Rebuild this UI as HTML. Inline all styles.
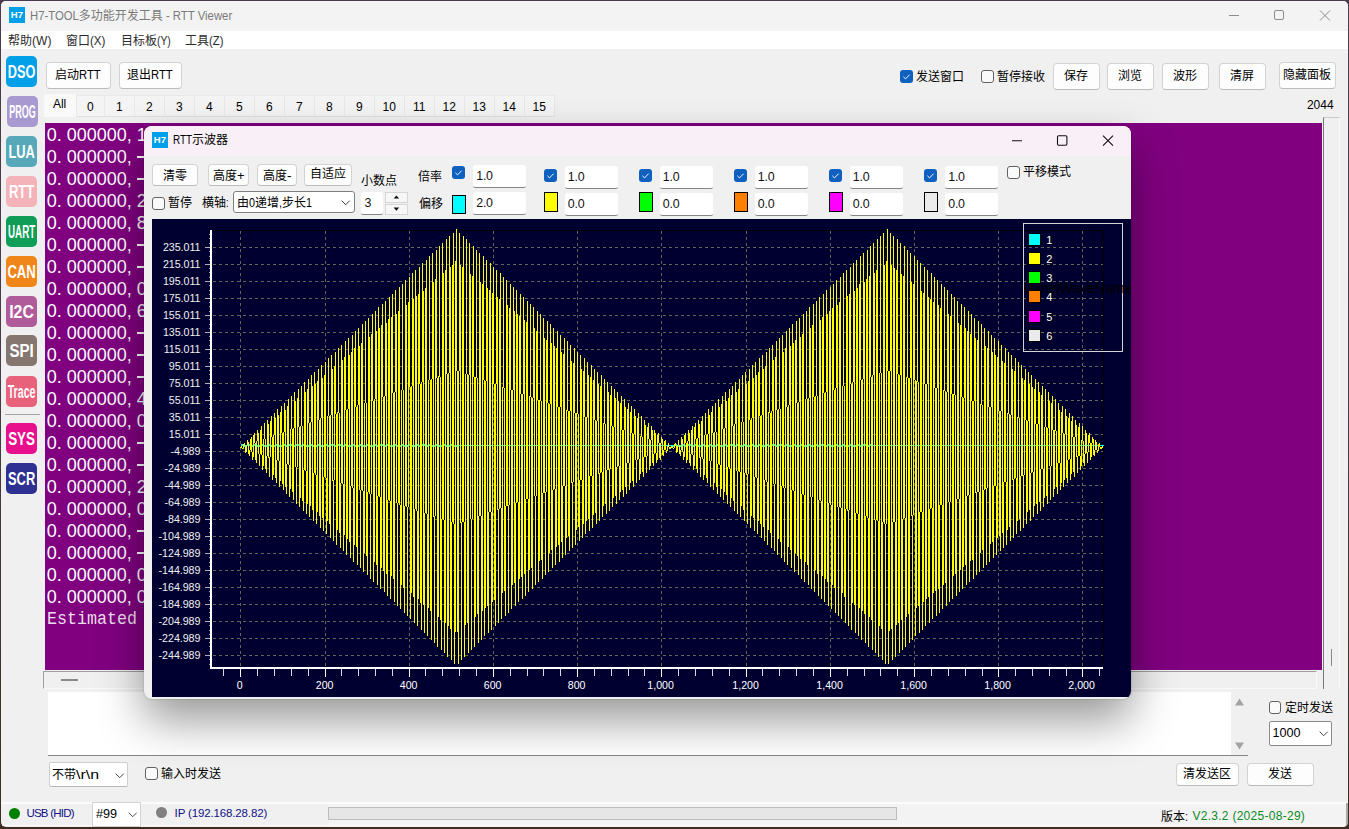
<!DOCTYPE html>
<html lang="zh"><head><meta charset="utf-8"><title>H7-TOOL - RTT Viewer</title><style>
html,body{margin:0;padding:0}
body{width:1349px;height:829px;overflow:hidden;background:linear-gradient(#4b3b4f,#4a3a48 45%,#3d2c22);font-family:"Liberation Sans", sans-serif;position:relative}
div,span.t,span.m,svg.l{position:absolute}
svg.l{overflow:visible}
svg.l text{stroke:none;font-family:"Liberation Sans", "Noto Sans CJK SC", sans-serif}
#win{left:1px;top:1px;width:1347px;height:826px;background:#f0f0f0;border-radius:5px;overflow:hidden}
#osc{background:#f0f0f0;border-radius:8px;overflow:hidden;box-shadow:0 21px 46px rgba(0,0,0,.41),0 0 2px rgba(0,0,0,.25)}
#plot{background:#000030;overflow:hidden}
.btn{background:#fdfdfd;border:1px solid #d3d3d3;border-bottom-color:#bcbcbc;border-radius:4px;box-sizing:border-box}
span.d{position:absolute;font-size:18px;line-height:22px;height:22px;color:#fff;white-space:pre}
span.m{font-family:"Liberation Mono",monospace;font-size:16.67px;line-height:22px;height:22px;color:rgba(255,255,255,.88);white-space:pre;transform-origin:0 50%;transform:scaleY(1.14)}
</style></head><body>
<div id="win">
<div style="left:0px;top:0px;width:1347px;height:30px;background:#f3f3f3"></div>
<div style="left:0px;top:30px;width:1347px;height:18px;background:#fff"></div>
<div style="left:8px;top:6px;width:16px;height:16px;background:#00a0e8"><span class="t" style="left:0;top:0;width:16px;height:16px;line-height:16px;text-align:center;font-size:9.5px;font-weight:bold;color:#fff;letter-spacing:0.2px">H7</span></div>
<svg class="l" style="left:29.4px;top:2.5px" width="205" height="24" font-size="12" fill="#7a7a7a" stroke="#7a7a7a" stroke-width="0"><title>H7-TOOL多功能开发工具 - RTT Viewer</title><text x="48.78" y="16.44" textLength="84" lengthAdjust="spacingAndGlyphs">多功能开发工具</text><text x="0.00" y="16.44" textLength="48.78" lengthAdjust="spacingAndGlyphs" xml:space="preserve">H7-TOOL</text><text x="132.78" y="16.44" textLength="69.42" lengthAdjust="spacingAndGlyphs" xml:space="preserve"> - RTT Viewer</text></svg>
<svg class="l" style="left:1220px;top:0" width="126" height="30" fill="none" stroke="#8c8c8c" stroke-width="1"><path d="M8 14.5H18"/><rect x="53.5" y="9.5" width="9" height="9" rx="1.5"/><path d="M99 9.5L109 19.5M109 9.5L99 19.5"/></svg>
<svg class="l" style="left:7px;top:27.6px" width="46" height="24" font-size="12" fill="#2b2b2b" stroke="#2b2b2b" stroke-width="0"><title>帮助(W)</title><text x="0" y="16.44" textLength="24" lengthAdjust="spacingAndGlyphs">帮助</text><text x="24.00" y="16.44" textLength="19.40" lengthAdjust="spacingAndGlyphs" xml:space="preserve">(W)</text></svg>
<svg class="l" style="left:65px;top:27.6px" width="42" height="24" font-size="12" fill="#2b2b2b" stroke="#2b2b2b" stroke-width="0"><title>窗口(X)</title><text x="0" y="16.44" textLength="24" lengthAdjust="spacingAndGlyphs">窗口</text><text x="24.00" y="16.44" textLength="15.40" lengthAdjust="spacingAndGlyphs" xml:space="preserve">(X)</text></svg>
<svg class="l" style="left:119.6px;top:27.6px" width="52" height="24" font-size="12" fill="#2b2b2b" stroke="#2b2b2b" stroke-width="0"><title>目标板(Y)</title><text x="0" y="16.44" textLength="36" lengthAdjust="spacingAndGlyphs">目标板</text><text x="36.00" y="16.44" textLength="13.80" lengthAdjust="spacingAndGlyphs" xml:space="preserve">(Y)</text></svg>
<svg class="l" style="left:184px;top:27.6px" width="41" height="24" font-size="12" fill="#2b2b2b" stroke="#2b2b2b" stroke-width="0"><title>工具(Z)</title><text x="0" y="16.44" textLength="24" lengthAdjust="spacingAndGlyphs">工具</text><text x="24.00" y="16.44" textLength="14.40" lengthAdjust="spacingAndGlyphs" xml:space="preserve">(Z)</text></svg>
<div style="left:5.3px;top:55px;width:31.2px;height:31.2px;background:#00a0e8;border-radius:5px"><svg class="l" style="left:0;top:0" width="31.2" height="31.2"><text x="15.6" y="22.2" text-anchor="middle" textLength="27.6" lengthAdjust="spacingAndGlyphs" font-size="18" font-weight="bold" fill="#fff">DSO</text></svg></div>
<div style="left:6.1px;top:95px;width:31.2px;height:31.2px;background:#a999d1;border-radius:5px"><svg class="l" style="left:0;top:0" width="31.2" height="31.2"><text x="15.6" y="22.2" text-anchor="middle" textLength="26.5" lengthAdjust="spacingAndGlyphs" font-size="18" font-weight="bold" fill="#fff">PROG</text></svg></div>
<div style="left:5.3px;top:135px;width:31.2px;height:31.2px;background:#57a9b9;border-radius:5px"><svg class="l" style="left:0;top:0" width="31.2" height="31.2"><text x="15.6" y="22.2" text-anchor="middle" textLength="26.4" lengthAdjust="spacingAndGlyphs" font-size="18" font-weight="bold" fill="#fff">LUA</text></svg></div>
<div style="left:5.3px;top:175px;width:31.2px;height:31.2px;background:#f4b3b9;border-radius:5px"><svg class="l" style="left:0;top:0" width="31.2" height="31.2"><text x="15.6" y="22.2" text-anchor="middle" textLength="25.4" lengthAdjust="spacingAndGlyphs" font-size="18" font-weight="bold" fill="#fff">RTT</text></svg></div>
<div style="left:5.3px;top:214.5px;width:31.2px;height:31.2px;background:#0f9d58;border-radius:5px"><svg class="l" style="left:0;top:0" width="31.2" height="31.2"><text x="15.6" y="22.2" text-anchor="middle" textLength="27.2" lengthAdjust="spacingAndGlyphs" font-size="18" font-weight="bold" fill="#fff">UART</text></svg></div>
<div style="left:5.3px;top:254.5px;width:31.2px;height:31.2px;background:#f0851a;border-radius:5px"><svg class="l" style="left:0;top:0" width="31.2" height="31.2"><text x="15.6" y="22.2" text-anchor="middle" textLength="28.4" lengthAdjust="spacingAndGlyphs" font-size="18" font-weight="bold" fill="#fff">CAN</text></svg></div>
<div style="left:5.3px;top:295px;width:31.2px;height:31.2px;background:#b05c9b;border-radius:5px"><svg class="l" style="left:0;top:0" width="31.2" height="31.2"><text x="15.6" y="22.2" text-anchor="middle" textLength="24.8" lengthAdjust="spacingAndGlyphs" font-size="18" font-weight="bold" fill="#fff">I2C</text></svg></div>
<div style="left:5.3px;top:333.6px;width:31.2px;height:31.2px;background:#867670;border-radius:5px"><svg class="l" style="left:0;top:0" width="31.2" height="31.2"><text x="15.6" y="22.2" text-anchor="middle" textLength="24.4" lengthAdjust="spacingAndGlyphs" font-size="18" font-weight="bold" fill="#fff">SPI</text></svg></div>
<div style="left:5.3px;top:374.8px;width:31.2px;height:31.2px;background:#e8627c;border-radius:5px"><svg class="l" style="left:0;top:0" width="31.2" height="31.2"><text x="15.6" y="22.2" text-anchor="middle" textLength="27.8" lengthAdjust="spacingAndGlyphs" font-size="18" font-weight="bold" fill="#fff">Trace</text></svg></div>
<div style="left:5.3px;top:421.8px;width:31.2px;height:31.2px;background:#e8108c;border-radius:5px"><svg class="l" style="left:0;top:0" width="31.2" height="31.2"><text x="15.6" y="22.2" text-anchor="middle" textLength="26.8" lengthAdjust="spacingAndGlyphs" font-size="18" font-weight="bold" fill="#fff">SYS</text></svg></div>
<div style="left:5.3px;top:462.2px;width:31.2px;height:31.2px;background:#2e3192;border-radius:5px"><svg class="l" style="left:0;top:0" width="31.2" height="31.2"><text x="15.6" y="22.2" text-anchor="middle" textLength="27.2" lengthAdjust="spacingAndGlyphs" font-size="18" font-weight="bold" fill="#fff">SCR</text></svg></div>
<div style="left:4px;top:413px;width:35px;height:1px;background:#a6a6a6"></div>
<div class="btn" style="left:45px;top:61px;width:65px;height:27px;"></div><svg class="l" style="left:54.05px;top:62.2px" width="48" height="24" font-size="12" fill="#000" stroke="#000" stroke-width="0"><title>启动RTT</title><text x="0" y="16.44" textLength="24" lengthAdjust="spacingAndGlyphs">启动</text><text x="24.00" y="16.44" textLength="21.70" lengthAdjust="spacingAndGlyphs" xml:space="preserve">RTT</text></svg>
<div class="btn" style="left:118px;top:61px;width:63px;height:27px;"></div><svg class="l" style="left:126.05000000000001px;top:62.2px" width="48" height="24" font-size="12" fill="#000" stroke="#000" stroke-width="0"><title>退出RTT</title><text x="0" y="16.44" textLength="24" lengthAdjust="spacingAndGlyphs">退出</text><text x="24.00" y="16.44" textLength="21.70" lengthAdjust="spacingAndGlyphs" xml:space="preserve">RTT</text></svg>
<div style="left:899px;top:69px;width:13px;height:13px;background:#1060c0;border-radius:3px"><svg class="l" style="left:0;top:0" width="13" height="13" fill="none" stroke="#fff" stroke-width="0.95"><path d="M3.4 6.8L5.5 8.9L9.6 4.7"/></svg></div>
<svg class="l" style="left:915px;top:63.599999999999994px" width="50" height="24" font-size="12" fill="#000" stroke="#000" stroke-width="0"><title>发送窗口</title><text x="0" y="16.44" textLength="48" lengthAdjust="spacingAndGlyphs">发送窗口</text></svg>
<div style="left:980px;top:69px;width:13px;height:13px;background:#fafafa;border:1px solid #626262;border-radius:3px;box-sizing:border-box"></div>
<svg class="l" style="left:996px;top:63.599999999999994px" width="50" height="24" font-size="12" fill="#000" stroke="#000" stroke-width="0"><title>暂停接收</title><text x="0" y="16.44" textLength="48" lengthAdjust="spacingAndGlyphs">暂停接收</text></svg>
<div class="btn" style="left:1052px;top:62px;width:47px;height:27px;"></div><svg class="l" style="left:1062.9px;top:63.2px" width="26" height="24" font-size="12" fill="#000" stroke="#000" stroke-width="0"><title>保存</title><text x="0" y="16.44" textLength="24" lengthAdjust="spacingAndGlyphs">保存</text></svg>
<div class="btn" style="left:1106px;top:62px;width:47px;height:27px;"></div><svg class="l" style="left:1116.9px;top:63.2px" width="26" height="24" font-size="12" fill="#000" stroke="#000" stroke-width="0"><title>浏览</title><text x="0" y="16.44" textLength="24" lengthAdjust="spacingAndGlyphs">浏览</text></svg>
<div class="btn" style="left:1161px;top:62px;width:47px;height:27px;"></div><svg class="l" style="left:1171.9px;top:63.2px" width="26" height="24" font-size="12" fill="#000" stroke="#000" stroke-width="0"><title>波形</title><text x="0" y="16.44" textLength="24" lengthAdjust="spacingAndGlyphs">波形</text></svg>
<div class="btn" style="left:1218px;top:62px;width:47px;height:27px;"></div><svg class="l" style="left:1228.9px;top:63.2px" width="26" height="24" font-size="12" fill="#000" stroke="#000" stroke-width="0"><title>清屏</title><text x="0" y="16.44" textLength="24" lengthAdjust="spacingAndGlyphs">清屏</text></svg>
<div class="btn" style="left:1278px;top:61px;width:57px;height:27px;"></div><svg class="l" style="left:1281.9px;top:61.8px" width="50" height="24" font-size="12" fill="#000" stroke="#000" stroke-width="0"><title>隐藏面板</title><text x="0" y="16.44" textLength="48" lengthAdjust="spacingAndGlyphs">隐藏面板</text></svg>
<span class="t" style="top:95.6px;line-height:16px;height:16px;font-size:12px;color:#000;white-space:pre;;left:1032.6px;width:300px;text-align:right;">2044</span>
<div style="left:43px;top:93px;width:32px;height:23px;background:#f9f9f9"></div>
<span class="t" style="top:95.2px;line-height:16px;height:16px;font-size:12px;color:#000;white-space:pre;;left:-91.4px;width:300px;text-align:center;">All</span>
<div style="left:75px;top:94px;width:28px;height:22px;background:#f4f4f4;border:1px solid #e9e9e9;border-right:none;border-bottom:1px solid #e0e0e0;box-sizing:border-box"></div>
<span class="t" style="top:98.0px;line-height:16px;height:16px;font-size:12px;color:#000;white-space:pre;;left:-60.7px;width:300px;text-align:center;">0</span>
<div style="left:103px;top:94px;width:30px;height:22px;background:#f4f4f4;border:1px solid #e9e9e9;border-right:none;border-bottom:1px solid #e0e0e0;box-sizing:border-box"></div>
<span class="t" style="top:98.0px;line-height:16px;height:16px;font-size:12px;color:#000;white-space:pre;;left:-31.700000000000003px;width:300px;text-align:center;">1</span>
<div style="left:133px;top:94px;width:30px;height:22px;background:#f4f4f4;border:1px solid #e9e9e9;border-right:none;border-bottom:1px solid #e0e0e0;box-sizing:border-box"></div>
<span class="t" style="top:98.0px;line-height:16px;height:16px;font-size:12px;color:#000;white-space:pre;;left:-1.6999999999999886px;width:300px;text-align:center;">2</span>
<div style="left:163px;top:94px;width:30px;height:22px;background:#f4f4f4;border:1px solid #e9e9e9;border-right:none;border-bottom:1px solid #e0e0e0;box-sizing:border-box"></div>
<span class="t" style="top:98.0px;line-height:16px;height:16px;font-size:12px;color:#000;white-space:pre;;left:28.30000000000001px;width:300px;text-align:center;">3</span>
<div style="left:193px;top:94px;width:30px;height:22px;background:#f4f4f4;border:1px solid #e9e9e9;border-right:none;border-bottom:1px solid #e0e0e0;box-sizing:border-box"></div>
<span class="t" style="top:98.0px;line-height:16px;height:16px;font-size:12px;color:#000;white-space:pre;;left:58.30000000000001px;width:300px;text-align:center;">4</span>
<div style="left:223px;top:94px;width:30px;height:22px;background:#f4f4f4;border:1px solid #e9e9e9;border-right:none;border-bottom:1px solid #e0e0e0;box-sizing:border-box"></div>
<span class="t" style="top:98.0px;line-height:16px;height:16px;font-size:12px;color:#000;white-space:pre;;left:88.30000000000001px;width:300px;text-align:center;">5</span>
<div style="left:253px;top:94px;width:30px;height:22px;background:#f4f4f4;border:1px solid #e9e9e9;border-right:none;border-bottom:1px solid #e0e0e0;box-sizing:border-box"></div>
<span class="t" style="top:98.0px;line-height:16px;height:16px;font-size:12px;color:#000;white-space:pre;;left:118.30000000000001px;width:300px;text-align:center;">6</span>
<div style="left:283px;top:94px;width:30px;height:22px;background:#f4f4f4;border:1px solid #e9e9e9;border-right:none;border-bottom:1px solid #e0e0e0;box-sizing:border-box"></div>
<span class="t" style="top:98.0px;line-height:16px;height:16px;font-size:12px;color:#000;white-space:pre;;left:148.3px;width:300px;text-align:center;">7</span>
<div style="left:313px;top:94px;width:30px;height:22px;background:#f4f4f4;border:1px solid #e9e9e9;border-right:none;border-bottom:1px solid #e0e0e0;box-sizing:border-box"></div>
<span class="t" style="top:98.0px;line-height:16px;height:16px;font-size:12px;color:#000;white-space:pre;;left:178.3px;width:300px;text-align:center;">8</span>
<div style="left:343px;top:94px;width:30px;height:22px;background:#f4f4f4;border:1px solid #e9e9e9;border-right:none;border-bottom:1px solid #e0e0e0;box-sizing:border-box"></div>
<span class="t" style="top:98.0px;line-height:16px;height:16px;font-size:12px;color:#000;white-space:pre;;left:208.3px;width:300px;text-align:center;">9</span>
<div style="left:373px;top:94px;width:30px;height:22px;background:#f4f4f4;border:1px solid #e9e9e9;border-right:none;border-bottom:1px solid #e0e0e0;box-sizing:border-box"></div>
<span class="t" style="top:98.0px;line-height:16px;height:16px;font-size:12px;color:#000;white-space:pre;;left:238.3px;width:300px;text-align:center;">10</span>
<div style="left:403px;top:94px;width:30px;height:22px;background:#f4f4f4;border:1px solid #e9e9e9;border-right:none;border-bottom:1px solid #e0e0e0;box-sizing:border-box"></div>
<span class="t" style="top:98.0px;line-height:16px;height:16px;font-size:12px;color:#000;white-space:pre;;left:268.3px;width:300px;text-align:center;">11</span>
<div style="left:433px;top:94px;width:30px;height:22px;background:#f4f4f4;border:1px solid #e9e9e9;border-right:none;border-bottom:1px solid #e0e0e0;box-sizing:border-box"></div>
<span class="t" style="top:98.0px;line-height:16px;height:16px;font-size:12px;color:#000;white-space:pre;;left:298.3px;width:300px;text-align:center;">12</span>
<div style="left:463px;top:94px;width:30px;height:22px;background:#f4f4f4;border:1px solid #e9e9e9;border-right:none;border-bottom:1px solid #e0e0e0;box-sizing:border-box"></div>
<span class="t" style="top:98.0px;line-height:16px;height:16px;font-size:12px;color:#000;white-space:pre;;left:328.3px;width:300px;text-align:center;">13</span>
<div style="left:493px;top:94px;width:30px;height:22px;background:#f4f4f4;border:1px solid #e9e9e9;border-right:none;border-bottom:1px solid #e0e0e0;box-sizing:border-box"></div>
<span class="t" style="top:98.0px;line-height:16px;height:16px;font-size:12px;color:#000;white-space:pre;;left:358.3px;width:300px;text-align:center;">14</span>
<div style="left:523px;top:94px;width:30px;height:22px;background:#f4f4f4;border:1px solid #e9e9e9;border-right:none;border-bottom:1px solid #e0e0e0;box-sizing:border-box"></div>
<span class="t" style="top:98.0px;line-height:16px;height:16px;font-size:12px;color:#000;white-space:pre;;left:388.29999999999995px;width:300px;text-align:center;">15</span>
<div style="left:553px;top:94px;width:1px;height:22px;background:#e6e6e6"></div>
<div style="left:44px;top:122px;width:1277px;height:547px;background:#800080"></div>
<span class="d" style="left:45.7px;top:122.76px">0. 000000, 1</span>
<span class="d" style="left:45.7px;top:144.76px">0. 000000, </span>
<div style="left:136px;top:155.2px;width:10px;height:1.4px;background:#fff"></div>
<span class="d" style="left:45.7px;top:166.76px">0. 000000, </span>
<div style="left:136px;top:177.2px;width:10px;height:1.4px;background:#fff"></div>
<span class="d" style="left:45.7px;top:188.76px">0. 000000, 2</span>
<span class="d" style="left:45.7px;top:210.76px">0. 000000, 8</span>
<span class="d" style="left:45.7px;top:232.76px">0. 000000, </span>
<div style="left:136px;top:243.2px;width:10px;height:1.4px;background:#fff"></div>
<span class="d" style="left:45.7px;top:254.76px">0. 000000, </span>
<div style="left:136px;top:265.2px;width:10px;height:1.4px;background:#fff"></div>
<span class="d" style="left:45.7px;top:276.76px">0. 000000, 0</span>
<span class="d" style="left:45.7px;top:298.76px">0. 000000, 6</span>
<span class="d" style="left:45.7px;top:320.76px">0. 000000, </span>
<div style="left:136px;top:331.2px;width:10px;height:1.4px;background:#fff"></div>
<span class="d" style="left:45.7px;top:342.76px">0. 000000, </span>
<div style="left:136px;top:353.2px;width:10px;height:1.4px;background:#fff"></div>
<span class="d" style="left:45.7px;top:364.76px">0. 000000, </span>
<div style="left:136px;top:375.2px;width:10px;height:1.4px;background:#fff"></div>
<span class="d" style="left:45.7px;top:386.76px">0. 000000, 4</span>
<span class="d" style="left:45.7px;top:408.76px">0. 000000, 0</span>
<span class="d" style="left:45.7px;top:430.76px">0. 000000, </span>
<div style="left:136px;top:441.2px;width:10px;height:1.4px;background:#fff"></div>
<span class="d" style="left:45.7px;top:452.76px">0. 000000, </span>
<div style="left:136px;top:463.2px;width:10px;height:1.4px;background:#fff"></div>
<span class="d" style="left:45.7px;top:474.76px">0. 000000, 2</span>
<span class="d" style="left:45.7px;top:496.76px">0. 000000, 0</span>
<span class="d" style="left:45.7px;top:518.76px">0. 000000, </span>
<div style="left:136px;top:529.2px;width:10px;height:1.4px;background:#fff"></div>
<span class="d" style="left:45.7px;top:540.76px">0. 000000, </span>
<div style="left:136px;top:551.2px;width:10px;height:1.4px;background:#fff"></div>
<span class="d" style="left:45.7px;top:562.76px">0. 000000, 0</span>
<span class="d" style="left:45.7px;top:584.76px">0. 000000, 0</span>
<span class="m" style="left:46px;top:607px">Estimated </span>
<div style="left:1321.6px;top:116px;width:17px;height:572px;background:#f0f0f0;border-left:1px solid #7a7a7a;border-top:1px solid #c8c8c8;border-right:1px solid #fafafa;box-sizing:border-box"></div>
<div style="left:1330px;top:648px;width:1px;height:17px;background:#8a8a8a"></div>
<div style="left:42.4px;top:669.6px;width:1274px;height:18px;background:#f0f0f0;border-top:1px solid #a0a0a0;border-left:1px solid #a0a0a0;border-bottom:1px solid #fafafa;border-right:1px solid #fafafa;box-sizing:border-box"></div>
<div style="left:60px;top:678.4px;width:17px;height:1.4px;background:#8a8a8a"></div>
<div style="left:47px;top:691px;width:1200px;height:63.4px;background:#fff;border-bottom:1px solid #868686"></div>
<div style="left:1230px;top:691px;width:16.6px;height:63.4px;background:#f0f0f0"></div>
<svg class="l" style="left:1230px;top:691px" width="17" height="64" fill="#a3a3a3"><path d="M4 13.5L8.5 6.5L13 13.5Z M4 50.5L8.5 57.5L13 50.5Z"/></svg>
<div style="left:1268px;top:700.4px;width:12.4px;height:12.4px;background:#fafafa;border:1px solid #626262;border-radius:3px;box-sizing:border-box"></div>
<svg class="l" style="left:1284px;top:695.1px" width="50" height="24" font-size="12" fill="#000" stroke="#000" stroke-width="0"><title>定时发送</title><text x="0" y="16.44" textLength="48" lengthAdjust="spacingAndGlyphs">定时发送</text></svg>
<div style="left:1268px;top:720px;width:63px;height:25px;background:#fff;border:1px solid #8a8a8a;border-radius:2px;box-sizing:border-box"></div>
<span class="t" style="top:723.6px;line-height:16px;height:16px;font-size:12.6px;color:#000;white-space:pre;;left:1271.6px;">1000</span>
<svg class="l" style="left:1317.6px;top:730px" width="10" height="6" fill="none" stroke="#444" stroke-width="1"><path d="M0.7 0.7L4.7 4.7L8.7 0.7"/></svg>
<div style="left:48px;top:761px;width:79px;height:25px;background:#fff;border:1px solid #cfcfcf;border-bottom-color:#b8b8b8;border-radius:2px;box-sizing:border-box"></div>
<svg class="l" style="left:51.4px;top:762px" width="49" height="24" font-size="12" fill="#000" stroke="#000" stroke-width="0"><title>不带\r\n</title><text x="0" y="16.44" textLength="24" lengthAdjust="spacingAndGlyphs">不带</text><text x="24.00" y="16.44" textLength="23.00" lengthAdjust="spacingAndGlyphs" xml:space="preserve">\r\n</text></svg>
<svg class="l" style="left:114px;top:772px" width="10" height="6" fill="none" stroke="#444" stroke-width="1"><path d="M0.7 0.7L4.7 4.7L8.7 0.7"/></svg>
<div style="left:144px;top:766px;width:12.6px;height:12.6px;background:#fafafa;border:1px solid #626262;border-radius:3px;box-sizing:border-box"></div>
<svg class="l" style="left:160px;top:760.6px" width="62" height="24" font-size="12" fill="#000" stroke="#000" stroke-width="0"><title>输入时发送</title><text x="0" y="16.44" textLength="60" lengthAdjust="spacingAndGlyphs">输入时发送</text></svg>
<div class="btn" style="left:1175px;top:762px;width:63px;height:23px;"></div><svg class="l" style="left:1181.9px;top:761.2px" width="50" height="24" font-size="12" fill="#000" stroke="#000" stroke-width="0"><title>清发送区</title><text x="0" y="16.44" textLength="48" lengthAdjust="spacingAndGlyphs">清发送区</text></svg>
<div class="btn" style="left:1246px;top:762px;width:67px;height:23px;"></div><svg class="l" style="left:1266.9px;top:761.2px" width="26" height="24" font-size="12" fill="#000" stroke="#000" stroke-width="0"><title>发送</title><text x="0" y="16.44" textLength="24" lengthAdjust="spacingAndGlyphs">发送</text></svg>
<div style="left:0px;top:801px;width:1347px;height:2px;background:#fcfcfc"></div>
<div style="left:327px;top:803px;width:1018px;height:23px;background:#f3f3f3"></div>
<div style="left:1345px;top:802px;width:2px;height:24px;background:#a9a9a9"></div>
<div style="left:0px;top:824px;width:1345px;height:1px;background:#fafafa"></div>
<div style="left:8.4px;top:807px;width:11px;height:11px;background:#008000;border-radius:50%"></div>
<span class="t" style="top:804.0px;line-height:16px;height:16px;font-size:11.5px;color:#101088;white-space:pre;letter-spacing:-0.75px;left:25.4px;">USB (HID)</span>
<div style="left:91px;top:801px;width:49px;height:25px;background:#fff;border:1px solid #d4d4d4;box-sizing:border-box"></div>
<span class="t" style="top:805.0px;line-height:16px;height:16px;font-size:12.6px;color:#000;white-space:pre;;left:95px;">#99</span>
<svg class="l" style="left:127.4px;top:811px" width="10" height="6" fill="none" stroke="#444" stroke-width="1"><path d="M0.7 0.7L4.7 4.7L8.7 0.7"/></svg>
<div style="left:155.4px;top:806.4px;width:10.8px;height:10.8px;background:#808080;border-radius:50%"></div>
<span class="t" style="top:804.0px;line-height:16px;height:16px;font-size:11.5px;color:#101088;white-space:pre;letter-spacing:-0.14px;left:173.6px;">IP (192.168.28.82)</span>
<div style="left:327.4px;top:806.4px;width:568.2px;height:13px;background:#e6e6e6;border:1px solid #bcbcbc;box-sizing:border-box"></div>
<svg class="l" style="left:1160px;top:803.6px" width="29" height="24" font-size="12" fill="#000" stroke="#000" stroke-width="0"><title>版本:</title><text x="0" y="16.44" textLength="24" lengthAdjust="spacingAndGlyphs">版本</text><text x="24.00" y="16.44" textLength="3.00" lengthAdjust="spacingAndGlyphs" xml:space="preserve">:</text></svg>
<span class="t" style="top:807.4px;line-height:16px;height:16px;font-size:12px;color:#0a8a1e;white-space:pre;letter-spacing:0.28px;left:1191.4px;">V2.3.2 (2025-08-29)</span>
<div id="osc" style="left:143px;top:125px;width:987px;height:573px">
<div style="left:0px;top:0px;width:987px;height:30px;background:#f9eff6"></div>
<div style="left:8px;top:6px;width:16px;height:16px;background:#00a0e8"><span class="t" style="left:0;top:0;width:16px;height:16px;line-height:16px;text-align:center;font-size:9.5px;font-weight:bold;color:#fff;letter-spacing:0.2px">H7</span></div>
<svg class="l" style="left:29px;top:2.4000000000000057px" width="57" height="24" font-size="12" fill="#000" stroke="#000" stroke-width="0"><title>RTT示波器</title><text x="19" y="16.44" textLength="36" lengthAdjust="spacingAndGlyphs">示波器</text><text x="0.00" y="16.44" textLength="19.00" lengthAdjust="spacingAndGlyphs" xml:space="preserve">RTT</text></svg>
<svg class="l" style="left:856px;top:-0.4000000000000057px" width="126" height="30" fill="none" stroke="#111" stroke-width="1.1"><path d="M12 14.8H22"/><rect x="57.5" y="9.7" width="9.4" height="9.6" rx="1.2"/><path d="M103 9.6L113 19.6M113 9.6L103 19.6"/></svg>
<div class="btn" style="left:8.400000000000006px;top:38.400000000000006px;width:46px;height:22px;"></div><svg class="l" style="left:19.400000000000006px;top:37.60000000000001px" width="26" height="24" font-size="12" fill="#000" stroke="#000" stroke-width="0"><title>清零</title><text x="0" y="16.44" textLength="24" lengthAdjust="spacingAndGlyphs">清零</text></svg>
<div class="btn" style="left:64.4px;top:38.400000000000006px;width:41px;height:22px;"></div><svg class="l" style="left:69.15px;top:37.60000000000001px" width="34" height="24" font-size="12" fill="#000" stroke="#000" stroke-width="0"><title>高度+</title><text x="0" y="16.44" textLength="24" lengthAdjust="spacingAndGlyphs">高度</text><text x="24.00" y="16.44" textLength="7.50" lengthAdjust="spacingAndGlyphs" xml:space="preserve">+</text></svg>
<div class="btn" style="left:113.39999999999998px;top:38.400000000000006px;width:40px;height:22px;"></div><svg class="l" style="left:119.14999999999998px;top:37.60000000000001px" width="31" height="24" font-size="12" fill="#000" stroke="#000" stroke-width="0"><title>高度-</title><text x="0" y="16.44" textLength="24" lengthAdjust="spacingAndGlyphs">高度</text><text x="24.00" y="16.44" textLength="4.50" lengthAdjust="spacingAndGlyphs" xml:space="preserve">-</text></svg>
<div class="btn" style="left:160px;top:38.400000000000006px;width:48px;height:21.4px;"></div><svg class="l" style="left:166.0px;top:36.30000000000001px" width="38" height="24" font-size="12" fill="#000" stroke="#000" stroke-width="0"><title>自适应</title><text x="0" y="16.44" textLength="36" lengthAdjust="spacingAndGlyphs">自适应</text></svg>
<svg class="l" style="left:217px;top:42.599999999999994px" width="38" height="24" font-size="12" fill="#000" stroke="#000" stroke-width="0"><title>小数点</title><text x="0" y="16.44" textLength="36" lengthAdjust="spacingAndGlyphs">小数点</text></svg>
<svg class="l" style="left:274.4px;top:39px" width="26" height="24" font-size="12" fill="#000" stroke="#000" stroke-width="0"><title>倍率</title><text x="0" y="16.44" textLength="24" lengthAdjust="spacingAndGlyphs">倍率</text></svg>
<svg class="l" style="left:275px;top:66.19999999999999px" width="26" height="24" font-size="12" fill="#000" stroke="#000" stroke-width="0"><title>偏移</title><text x="0" y="16.44" textLength="24" lengthAdjust="spacingAndGlyphs">偏移</text></svg>
<div style="left:8.400000000000006px;top:71.4px;width:12.6px;height:12.4px;background:#fafafa;border:1px solid #626262;border-radius:3px;box-sizing:border-box"></div>
<svg class="l" style="left:24px;top:65px" width="26" height="24" font-size="12" fill="#000" stroke="#000" stroke-width="0"><title>暂停</title><text x="0" y="16.44" textLength="24" lengthAdjust="spacingAndGlyphs">暂停</text></svg>
<svg class="l" style="left:58px;top:64.6px" width="29" height="24" font-size="12" fill="#000" stroke="#000" stroke-width="0"><title>横轴:</title><text x="0" y="16.44" textLength="24" lengthAdjust="spacingAndGlyphs">横轴</text><text x="24.00" y="16.44" textLength="2.60" lengthAdjust="spacingAndGlyphs" xml:space="preserve">:</text></svg>
<div style="left:89px;top:65.4px;width:121.6px;height:21.2px;background:#fff;border:1px solid #7f7f7f;border-radius:3px;box-sizing:border-box"></div>
<svg class="l" style="left:93.4px;top:65.19999999999999px" width="77" height="24" font-size="12" fill="#000" stroke="#000" stroke-width="0"><title>由0递增,步长1</title><text x="0" y="16.44">由</text><text x="18" y="16.44" textLength="24" lengthAdjust="spacingAndGlyphs">递增</text><text x="45" y="16.44" textLength="24" lengthAdjust="spacingAndGlyphs">步长</text><text x="12.00" y="16.44" textLength="6.00" lengthAdjust="spacingAndGlyphs" xml:space="preserve">0</text><text x="42.00" y="16.44" textLength="3.00" lengthAdjust="spacingAndGlyphs" xml:space="preserve">,</text><text x="69.00" y="16.44" textLength="6.00" lengthAdjust="spacingAndGlyphs" xml:space="preserve">1</text></svg>
<svg class="l" style="left:196.60000000000002px;top:74px" width="10" height="6" fill="none" stroke="#333" stroke-width="1"><path d="M0.7 0.7L4.7 4.7L8.7 0.7"/></svg>
<div style="left:217.39999999999998px;top:66px;width:21.4px;height:23px;background:#fff;border-bottom:1px solid #868686;border-radius:2.5px;box-sizing:border-box"></div><span class="t" style="top:68.80000000000001px;line-height:16px;height:16px;font-size:12.4px;color:#111;white-space:pre;letter-spacing:-0.2px;left:220.59999999999997px;">3</span>
<div style="left:241.39999999999998px;top:66.4px;width:22.8px;height:10.2px;background:#f7f7f7;border:1px solid #d6d6d6;box-sizing:border-box"></div>
<div style="left:241.39999999999998px;top:78.4px;width:22.8px;height:10.2px;background:#f7f7f7;border:1px solid #d6d6d6;box-sizing:border-box"></div>
<svg class="l" style="left:241.39999999999998px;top:66.4px" width="23" height="23" fill="#111"><path d="M8.6 6.6L11.4 3.4L14.2 6.6Z M8.6 15.6L11.4 18.8L14.2 15.6Z"/></svg>
<div style="left:308px;top:40px;width:13px;height:13px;background:#1060c0;border-radius:3px"><svg class="l" style="left:0;top:0" width="13" height="13" fill="none" stroke="#fff" stroke-width="0.95"><path d="M3.4 6.8L5.5 8.9L9.6 4.7"/></svg></div>
<div style="left:308px;top:69px;width:13.8px;height:19.4px;background:#00ffff;border:1px solid #000;box-sizing:border-box"></div>
<div style="left:329px;top:38.599999999999994px;width:53px;height:23.2px;background:#fff;border-bottom:1px solid #868686;border-radius:2.5px;box-sizing:border-box"></div><span class="t" style="top:42.0px;line-height:16px;height:16px;font-size:12.4px;color:#111;white-space:pre;letter-spacing:-0.2px;left:332.2px;">1.0</span>
<div style="left:329px;top:66px;width:53px;height:23.2px;background:#fff;border-bottom:1px solid #868686;border-radius:2.5px;box-sizing:border-box"></div><span class="t" style="top:69.0px;line-height:16px;height:16px;font-size:12.4px;color:#111;white-space:pre;letter-spacing:-0.2px;left:332.2px;">2.0</span>
<div style="left:400px;top:43px;width:13px;height:13px;background:#1060c0;border-radius:3px"><svg class="l" style="left:0;top:0" width="13" height="13" fill="none" stroke="#fff" stroke-width="0.95"><path d="M3.4 6.8L5.5 8.9L9.6 4.7"/></svg></div>
<div style="left:400px;top:66.4px;width:13.8px;height:19.4px;background:#ffff00;border:1px solid #000;box-sizing:border-box"></div>
<div style="left:420.6px;top:39.599999999999994px;width:53px;height:23.2px;background:#fff;border-bottom:1px solid #868686;border-radius:2.5px;box-sizing:border-box"></div><span class="t" style="top:42.599999999999994px;line-height:16px;height:16px;font-size:12.4px;color:#111;white-space:pre;letter-spacing:-0.2px;left:423.8px;">1.0</span>
<div style="left:420.6px;top:67px;width:53px;height:23.2px;background:#fff;border-bottom:1px solid #868686;border-radius:2.5px;box-sizing:border-box"></div><span class="t" style="top:70.0px;line-height:16px;height:16px;font-size:12.4px;color:#111;white-space:pre;letter-spacing:-0.2px;left:423.8px;">0.0</span>
<div style="left:495px;top:43px;width:13px;height:13px;background:#1060c0;border-radius:3px"><svg class="l" style="left:0;top:0" width="13" height="13" fill="none" stroke="#fff" stroke-width="0.95"><path d="M3.4 6.8L5.5 8.9L9.6 4.7"/></svg></div>
<div style="left:495px;top:66.4px;width:13.8px;height:19.4px;background:#00ff00;border:1px solid #000;box-sizing:border-box"></div>
<div style="left:515.6px;top:39.599999999999994px;width:53px;height:23.2px;background:#fff;border-bottom:1px solid #868686;border-radius:2.5px;box-sizing:border-box"></div><span class="t" style="top:42.599999999999994px;line-height:16px;height:16px;font-size:12.4px;color:#111;white-space:pre;letter-spacing:-0.2px;left:518.8000000000001px;">1.0</span>
<div style="left:515.6px;top:67px;width:53px;height:23.2px;background:#fff;border-bottom:1px solid #868686;border-radius:2.5px;box-sizing:border-box"></div><span class="t" style="top:70.0px;line-height:16px;height:16px;font-size:12.4px;color:#111;white-space:pre;letter-spacing:-0.2px;left:518.8000000000001px;">0.0</span>
<div style="left:590px;top:43px;width:13px;height:13px;background:#1060c0;border-radius:3px"><svg class="l" style="left:0;top:0" width="13" height="13" fill="none" stroke="#fff" stroke-width="0.95"><path d="M3.4 6.8L5.5 8.9L9.6 4.7"/></svg></div>
<div style="left:590px;top:66.4px;width:13.8px;height:19.4px;background:#ff8000;border:1px solid #000;box-sizing:border-box"></div>
<div style="left:610.6px;top:39.599999999999994px;width:53px;height:23.2px;background:#fff;border-bottom:1px solid #868686;border-radius:2.5px;box-sizing:border-box"></div><span class="t" style="top:42.599999999999994px;line-height:16px;height:16px;font-size:12.4px;color:#111;white-space:pre;letter-spacing:-0.2px;left:613.8000000000001px;">1.0</span>
<div style="left:610.6px;top:67px;width:53px;height:23.2px;background:#fff;border-bottom:1px solid #868686;border-radius:2.5px;box-sizing:border-box"></div><span class="t" style="top:70.0px;line-height:16px;height:16px;font-size:12.4px;color:#111;white-space:pre;letter-spacing:-0.2px;left:613.8000000000001px;">0.0</span>
<div style="left:685px;top:43px;width:13px;height:13px;background:#1060c0;border-radius:3px"><svg class="l" style="left:0;top:0" width="13" height="13" fill="none" stroke="#fff" stroke-width="0.95"><path d="M3.4 6.8L5.5 8.9L9.6 4.7"/></svg></div>
<div style="left:685px;top:66.4px;width:13.8px;height:19.4px;background:#ff00ff;border:1px solid #000;box-sizing:border-box"></div>
<div style="left:705.6px;top:39.599999999999994px;width:53px;height:23.2px;background:#fff;border-bottom:1px solid #868686;border-radius:2.5px;box-sizing:border-box"></div><span class="t" style="top:42.599999999999994px;line-height:16px;height:16px;font-size:12.4px;color:#111;white-space:pre;letter-spacing:-0.2px;left:708.8000000000001px;">1.0</span>
<div style="left:705.6px;top:67px;width:53px;height:23.2px;background:#fff;border-bottom:1px solid #868686;border-radius:2.5px;box-sizing:border-box"></div><span class="t" style="top:70.0px;line-height:16px;height:16px;font-size:12.4px;color:#111;white-space:pre;letter-spacing:-0.2px;left:708.8000000000001px;">0.0</span>
<div style="left:780px;top:43px;width:13px;height:13px;background:#1060c0;border-radius:3px"><svg class="l" style="left:0;top:0" width="13" height="13" fill="none" stroke="#fff" stroke-width="0.95"><path d="M3.4 6.8L5.5 8.9L9.6 4.7"/></svg></div>
<div style="left:780px;top:66.4px;width:13.8px;height:19.4px;background:#ebebeb;border:1px solid #000;box-sizing:border-box"></div>
<div style="left:801px;top:39.599999999999994px;width:53px;height:23.2px;background:#fff;border-bottom:1px solid #868686;border-radius:2.5px;box-sizing:border-box"></div><span class="t" style="top:42.599999999999994px;line-height:16px;height:16px;font-size:12.4px;color:#111;white-space:pre;letter-spacing:-0.2px;left:804.2px;">1.0</span>
<div style="left:801px;top:67px;width:53px;height:23.2px;background:#fff;border-bottom:1px solid #868686;border-radius:2.5px;box-sizing:border-box"></div><span class="t" style="top:70.0px;line-height:16px;height:16px;font-size:12.4px;color:#111;white-space:pre;letter-spacing:-0.2px;left:804.2px;">0.0</span>
<div style="left:863px;top:40.400000000000006px;width:12.6px;height:12.4px;background:#fafafa;border:1px solid #626262;border-radius:3px;box-sizing:border-box"></div>
<svg class="l" style="left:879px;top:34.19999999999999px" width="50" height="24" font-size="12" fill="#000" stroke="#000" stroke-width="0"><title>平移模式</title><text x="0" y="16.44" textLength="48" lengthAdjust="spacingAndGlyphs">平移模式</text></svg>
<div id="plot" style="left:8px;top:93px;width:979px;height:478px">
<svg class="l" style="left:0;top:0" width="979" height="478" shape-rendering="crispEdges"><path d="M60 11H951V448" fill="none" stroke="#000" stroke-width="1" transform="translate(0.5 0.5)"/><path d="M88.5 12V448M173.5 12V448M257.5 12V448M341.5 12V448M425.5 12V448M509.5 12V448M594.5 12V448M678.5 12V448M762.5 12V448M846.5 12V448M930.5 12V448M61 28.5H951M61 45.5H951M61 62.5H951M61 79.5H951M61 96.5H951M61 113.5H951M61 130.5H951M61 147.5H951M61 164.5H951M61 181.5H951M61 198.5H951M61 215.5H951M61 232.5H951M61 249.5H951M61 266.5H951M61 283.5H951M61 300.5H951M61 317.5H951M61 334.5H951M61 351.5H951M61 368.5H951M61 385.5H951M61 402.5H951M61 419.5H951M61 436.5H951" fill="none" stroke="#646459" stroke-width="1" stroke-dasharray="3 3"/><path d="M89 225v2h1v-2zM90 225v2h1v-2zM91 226v2h1v-2zM92 226v2h1v-2zM93 226v2h1v-2zM94 226v2h1v-2zM95 225v2h1v-2zM96 225v2h1v-2zM97 225v2h1v-2zM98 226v2h1v-2zM99 226v2h1v-2zM100 226v2h1v-2zM101 226v2h1v-2zM102 225v2h1v-2zM103 225v2h1v-2zM104 225v2h1v-2zM105 226v2h1v-2zM106 226v2h1v-2zM107 226v2h1v-2zM108 226v2h1v-2zM109 225v2h1v-2zM110 225v2h1v-2zM111 225v2h1v-2zM112 226v2h1v-2zM113 226v2h1v-2zM114 226v2h1v-2zM115 226v2h1v-2zM116 225v2h1v-2zM117 225v2h1v-2zM118 225v2h1v-2zM119 226v2h1v-2zM120 226v2h1v-2zM121 226v2h1v-2zM122 226v2h1v-2zM123 225v2h1v-2zM124 225v2h1v-2zM125 225v2h1v-2zM126 226v2h1v-2zM127 226v2h1v-2zM128 226v2h1v-2zM129 226v2h1v-2zM130 225v2h1v-2zM131 225v2h1v-2zM132 225v2h1v-2zM133 226v2h1v-2zM134 226v2h1v-2zM135 226v2h1v-2zM136 226v2h1v-2zM137 225v2h1v-2zM138 225v2h1v-2zM139 225v2h1v-2zM140 226v2h1v-2zM141 226v2h1v-2zM142 226v2h1v-2zM143 226v2h1v-2zM144 225v2h1v-2zM145 225v2h1v-2zM146 225v2h1v-2zM147 226v2h1v-2zM148 226v2h1v-2zM149 226v2h1v-2zM150 226v2h1v-2zM151 225v2h1v-2zM152 225v2h1v-2zM153 225v2h1v-2zM154 226v2h1v-2zM155 226v2h1v-2zM156 226v2h1v-2zM157 226v2h1v-2zM158 225v2h1v-2zM159 225v2h1v-2zM160 225v2h1v-2zM161 226v2h1v-2zM162 226v2h1v-2zM163 226v2h1v-2zM164 226v2h1v-2zM165 225v2h1v-2zM166 225v2h1v-2zM167 225v2h1v-2zM168 226v2h1v-2zM169 226v2h1v-2zM170 226v2h1v-2zM171 226v2h1v-2zM172 225v2h1v-2zM173 225v2h1v-2zM174 225v2h1v-2zM175 226v2h1v-2zM176 226v2h1v-2zM177 226v2h1v-2zM178 226v2h1v-2zM179 225v2h1v-2zM180 225v2h1v-2zM181 225v2h1v-2zM182 226v2h1v-2zM183 226v2h1v-2zM184 226v2h1v-2zM185 226v2h1v-2zM186 225v2h1v-2zM187 225v2h1v-2zM188 225v2h1v-2zM189 226v2h1v-2zM190 226v2h1v-2zM191 226v2h1v-2zM192 226v2h1v-2zM193 225v2h1v-2zM194 225v2h1v-2zM195 225v2h1v-2zM196 226v2h1v-2zM197 226v2h1v-2zM198 226v2h1v-2zM199 226v2h1v-2zM200 225v2h1v-2zM201 225v2h1v-2zM202 225v2h1v-2zM203 226v2h1v-2zM204 226v2h1v-2zM205 226v2h1v-2zM206 226v2h1v-2zM207 225v2h1v-2zM208 225v2h1v-2zM209 225v2h1v-2zM210 226v2h1v-2zM211 226v2h1v-2zM212 226v2h1v-2zM213 226v2h1v-2zM214 225v2h1v-2zM215 225v2h1v-2zM216 225v2h1v-2zM217 226v2h1v-2zM218 226v2h1v-2zM219 226v2h1v-2zM220 226v2h1v-2zM221 225v2h1v-2zM222 225v2h1v-2zM223 225v2h1v-2zM224 226v2h1v-2zM225 226v2h1v-2zM226 226v2h1v-2zM227 226v2h1v-2zM228 225v2h1v-2zM229 225v2h1v-2zM230 225v2h1v-2zM231 226v2h1v-2zM232 226v2h1v-2zM233 226v2h1v-2zM234 226v2h1v-2zM235 225v2h1v-2zM236 225v2h1v-2zM237 225v2h1v-2zM238 226v2h1v-2zM239 226v2h1v-2zM240 226v2h1v-2zM241 226v2h1v-2zM242 225v2h1v-2zM243 225v2h1v-2zM244 225v2h1v-2zM245 226v2h1v-2zM246 226v2h1v-2zM247 226v2h1v-2zM248 226v2h1v-2zM249 225v2h1v-2zM250 225v2h1v-2zM251 225v2h1v-2zM252 226v2h1v-2zM253 226v2h1v-2zM254 226v2h1v-2zM255 226v2h1v-2zM256 225v2h1v-2zM257 225v2h1v-2zM258 225v2h1v-2zM259 226v2h1v-2zM260 226v2h1v-2zM261 226v2h1v-2zM262 226v2h1v-2zM263 225v2h1v-2zM264 225v2h1v-2zM265 225v2h1v-2zM266 226v2h1v-2zM267 226v2h1v-2zM268 226v2h1v-2zM269 226v2h1v-2zM270 225v2h1v-2zM271 225v2h1v-2zM272 225v2h1v-2zM273 226v2h1v-2zM274 226v2h1v-2zM275 226v2h1v-2zM276 226v2h1v-2zM277 225v2h1v-2zM278 225v2h1v-2zM279 225v2h1v-2zM280 226v2h1v-2zM281 226v2h1v-2zM282 226v2h1v-2zM283 226v2h1v-2zM284 225v2h1v-2zM285 225v2h1v-2zM286 225v2h1v-2zM287 226v2h1v-2zM288 226v2h1v-2zM289 226v2h1v-2zM290 226v2h1v-2zM291 225v2h1v-2zM292 225v2h1v-2zM293 225v2h1v-2zM294 226v2h1v-2zM295 226v2h1v-2zM296 226v2h1v-2zM297 226v2h1v-2zM298 225v2h1v-2zM299 225v2h1v-2zM300 225v2h1v-2zM301 226v2h1v-2zM302 226v2h1v-2zM303 226v2h1v-2zM304 226v2h1v-2zM305 225v2h1v-2zM306 225v2h1v-2zM307 226v1h1v-1zM308 226v1h1v-1zM309 226v1h1v-1zM310 226v1h1v-1zM311 226v1h1v-1zM312 226v1h1v-1zM313 226v1h1v-1zM314 226v1h1v-1zM315 226v1h1v-1zM316 226v1h1v-1zM317 226v1h1v-1zM318 226v1h1v-1zM319 226v1h1v-1zM320 226v1h1v-1zM321 226v1h1v-1zM322 226v1h1v-1zM323 226v1h1v-1zM324 226v1h1v-1zM325 226v1h1v-1zM326 226v1h1v-1zM327 226v1h1v-1zM328 226v1h1v-1zM329 226v1h1v-1zM330 226v1h1v-1zM331 226v1h1v-1zM332 226v1h1v-1zM333 226v1h1v-1zM334 226v1h1v-1zM335 226v1h1v-1zM336 226v1h1v-1zM337 226v1h1v-1zM338 226v1h1v-1zM339 226v1h1v-1zM340 226v1h1v-1zM341 226v1h1v-1zM342 226v1h1v-1zM343 226v1h1v-1zM344 226v1h1v-1zM345 226v1h1v-1zM346 226v1h1v-1zM347 226v1h1v-1zM348 226v1h1v-1zM349 226v1h1v-1zM350 226v1h1v-1zM351 226v1h1v-1zM352 226v1h1v-1zM353 226v1h1v-1zM354 226v1h1v-1zM355 226v1h1v-1zM356 226v1h1v-1zM357 226v1h1v-1zM358 226v1h1v-1zM359 226v1h1v-1zM360 226v1h1v-1zM361 226v1h1v-1zM362 226v1h1v-1zM363 226v1h1v-1zM364 226v1h1v-1zM365 226v1h1v-1zM366 226v1h1v-1zM367 226v1h1v-1zM368 226v1h1v-1zM369 226v1h1v-1zM370 226v1h1v-1zM371 226v1h1v-1zM372 226v1h1v-1zM373 226v1h1v-1zM374 226v1h1v-1zM375 226v1h1v-1zM376 226v1h1v-1zM377 226v1h1v-1zM378 226v1h1v-1zM379 226v1h1v-1zM380 226v1h1v-1zM381 226v1h1v-1zM382 226v1h1v-1zM383 226v1h1v-1zM384 226v1h1v-1zM385 226v1h1v-1zM386 226v1h1v-1zM387 226v1h1v-1zM388 226v1h1v-1zM389 226v1h1v-1zM390 226v1h1v-1zM391 226v1h1v-1zM392 226v1h1v-1zM393 226v1h1v-1zM394 226v1h1v-1zM395 226v1h1v-1zM396 226v1h1v-1zM397 226v1h1v-1zM398 226v1h1v-1zM399 226v1h1v-1zM400 226v1h1v-1zM401 226v1h1v-1zM402 226v1h1v-1zM403 226v1h1v-1zM404 226v1h1v-1zM405 226v1h1v-1zM406 226v1h1v-1zM407 226v1h1v-1zM408 226v1h1v-1zM409 226v1h1v-1zM410 226v1h1v-1zM411 226v1h1v-1zM412 226v1h1v-1zM413 226v1h1v-1zM414 226v1h1v-1zM415 226v1h1v-1zM416 226v1h1v-1zM417 226v1h1v-1zM418 226v1h1v-1zM419 226v1h1v-1zM420 226v1h1v-1zM421 226v1h1v-1zM422 226v1h1v-1zM423 226v1h1v-1zM424 226v1h1v-1zM425 226v1h1v-1zM426 226v1h1v-1zM427 226v1h1v-1zM428 226v1h1v-1zM429 226v1h1v-1zM430 226v1h1v-1zM431 226v1h1v-1zM432 226v1h1v-1zM433 226v1h1v-1zM434 226v1h1v-1zM435 226v1h1v-1zM436 226v1h1v-1zM437 226v1h1v-1zM438 226v1h1v-1zM439 226v1h1v-1zM440 226v1h1v-1zM441 226v1h1v-1zM442 226v1h1v-1zM443 226v1h1v-1zM444 226v1h1v-1zM445 226v1h1v-1zM446 226v1h1v-1zM447 226v1h1v-1zM448 226v1h1v-1zM449 226v1h1v-1zM450 226v1h1v-1zM451 226v1h1v-1zM452 226v1h1v-1zM453 226v1h1v-1zM454 226v1h1v-1zM455 226v1h1v-1zM456 226v1h1v-1zM457 226v1h1v-1zM458 226v1h1v-1zM459 226v1h1v-1zM460 226v1h1v-1zM461 226v1h1v-1zM462 226v1h1v-1zM463 226v1h1v-1zM464 226v1h1v-1zM465 226v1h1v-1zM466 226v1h1v-1zM467 226v1h1v-1zM468 226v1h1v-1zM469 226v1h1v-1zM470 226v1h1v-1zM471 226v1h1v-1zM472 226v1h1v-1zM473 226v1h1v-1zM474 226v1h1v-1zM475 226v1h1v-1zM476 226v1h1v-1zM477 226v1h1v-1zM478 226v1h1v-1zM479 226v1h1v-1zM480 226v1h1v-1zM481 226v1h1v-1zM482 226v1h1v-1zM483 226v1h1v-1zM484 226v1h1v-1zM485 226v1h1v-1zM486 226v1h1v-1zM487 226v1h1v-1zM488 226v1h1v-1zM489 226v1h1v-1zM490 226v1h1v-1zM491 226v1h1v-1zM492 226v1h1v-1zM493 226v1h1v-1zM494 226v1h1v-1zM495 226v1h1v-1zM496 226v1h1v-1zM497 226v1h1v-1zM498 226v1h1v-1zM499 226v1h1v-1zM500 226v1h1v-1zM501 226v1h1v-1zM502 226v1h1v-1zM503 226v1h1v-1zM504 226v1h1v-1zM505 226v1h1v-1zM506 226v1h1v-1zM507 226v1h1v-1zM508 226v1h1v-1zM509 226v1h1v-1zM510 226v1h1v-1zM511 226v1h1v-1zM512 226v1h1v-1zM513 226v1h1v-1zM514 226v1h1v-1zM515 226v1h1v-1zM516 226v1h1v-1zM517 226v1h1v-1zM518 226v1h1v-1zM519 226v1h1v-1zM520 226v2h1v-2zM521 226v2h1v-2zM522 225v2h1v-2zM523 225v2h1v-2zM524 225v2h1v-2zM525 226v2h1v-2zM526 226v2h1v-2zM527 226v2h1v-2zM528 226v2h1v-2zM529 225v2h1v-2zM530 225v2h1v-2zM531 225v2h1v-2zM532 226v2h1v-2zM533 226v2h1v-2zM534 226v2h1v-2zM535 226v2h1v-2zM536 225v2h1v-2zM537 225v2h1v-2zM538 225v2h1v-2zM539 226v2h1v-2zM540 226v2h1v-2zM541 226v2h1v-2zM542 226v2h1v-2zM543 225v2h1v-2zM544 225v2h1v-2zM545 225v2h1v-2zM546 226v2h1v-2zM547 226v2h1v-2zM548 226v2h1v-2zM549 226v2h1v-2zM550 225v2h1v-2zM551 225v2h1v-2zM552 225v2h1v-2zM553 226v2h1v-2zM554 226v2h1v-2zM555 226v2h1v-2zM556 226v2h1v-2zM557 225v2h1v-2zM558 225v2h1v-2zM559 225v2h1v-2zM560 226v2h1v-2zM561 226v2h1v-2zM562 226v2h1v-2zM563 226v2h1v-2zM564 225v2h1v-2zM565 225v2h1v-2zM566 225v2h1v-2zM567 226v2h1v-2zM568 226v2h1v-2zM569 226v2h1v-2zM570 226v2h1v-2zM571 225v2h1v-2zM572 225v2h1v-2zM573 225v2h1v-2zM574 226v2h1v-2zM575 226v2h1v-2zM576 226v2h1v-2zM577 226v2h1v-2zM578 225v2h1v-2zM579 225v2h1v-2zM580 225v2h1v-2zM581 226v2h1v-2zM582 226v2h1v-2zM583 226v2h1v-2zM584 226v2h1v-2zM585 225v2h1v-2zM586 225v2h1v-2zM587 225v2h1v-2zM588 226v2h1v-2zM589 226v2h1v-2zM590 226v2h1v-2zM591 226v2h1v-2zM592 225v2h1v-2zM593 225v2h1v-2zM594 225v2h1v-2zM595 226v2h1v-2zM596 226v2h1v-2zM597 226v2h1v-2zM598 226v2h1v-2zM599 225v2h1v-2zM600 225v2h1v-2zM601 225v2h1v-2zM602 226v2h1v-2zM603 226v2h1v-2zM604 226v2h1v-2zM605 226v2h1v-2zM606 225v2h1v-2zM607 225v2h1v-2zM608 225v2h1v-2zM609 226v2h1v-2zM610 226v2h1v-2zM611 226v2h1v-2zM612 226v2h1v-2zM613 225v2h1v-2zM614 225v2h1v-2zM615 225v2h1v-2zM616 226v2h1v-2zM617 226v2h1v-2zM618 226v2h1v-2zM619 226v2h1v-2zM620 225v2h1v-2zM621 225v2h1v-2zM622 225v2h1v-2zM623 226v2h1v-2zM624 226v2h1v-2zM625 226v2h1v-2zM626 226v2h1v-2zM627 225v2h1v-2zM628 225v2h1v-2zM629 225v2h1v-2zM630 226v2h1v-2zM631 226v2h1v-2zM632 226v2h1v-2zM633 226v2h1v-2zM634 225v2h1v-2zM635 225v2h1v-2zM636 225v2h1v-2zM637 226v2h1v-2zM638 226v2h1v-2zM639 226v2h1v-2zM640 226v2h1v-2zM641 225v2h1v-2zM642 225v2h1v-2zM643 225v2h1v-2zM644 226v2h1v-2zM645 226v2h1v-2zM646 226v2h1v-2zM647 226v2h1v-2zM648 225v2h1v-2zM649 225v2h1v-2zM650 225v2h1v-2zM651 226v2h1v-2zM652 226v2h1v-2zM653 226v2h1v-2zM654 226v2h1v-2zM655 225v2h1v-2zM656 225v2h1v-2zM657 225v2h1v-2zM658 226v2h1v-2zM659 226v2h1v-2zM660 226v2h1v-2zM661 226v2h1v-2zM662 225v2h1v-2zM663 225v2h1v-2zM664 225v2h1v-2zM665 226v2h1v-2zM666 226v2h1v-2zM667 226v2h1v-2zM668 226v2h1v-2zM669 225v2h1v-2zM670 225v2h1v-2zM671 225v2h1v-2zM672 226v2h1v-2zM673 226v2h1v-2zM674 226v2h1v-2zM675 226v2h1v-2zM676 225v2h1v-2zM677 225v2h1v-2zM678 225v2h1v-2zM679 226v2h1v-2zM680 226v2h1v-2zM681 226v2h1v-2zM682 226v2h1v-2zM683 225v2h1v-2zM684 225v2h1v-2zM685 225v2h1v-2zM686 226v2h1v-2zM687 226v2h1v-2zM688 226v2h1v-2zM689 226v2h1v-2zM690 225v2h1v-2zM691 225v2h1v-2zM692 225v2h1v-2zM693 226v2h1v-2zM694 226v2h1v-2zM695 226v2h1v-2zM696 226v2h1v-2zM697 225v2h1v-2zM698 225v2h1v-2zM699 225v2h1v-2zM700 226v2h1v-2zM701 226v2h1v-2zM702 226v2h1v-2zM703 226v2h1v-2zM704 225v2h1v-2zM705 225v2h1v-2zM706 225v2h1v-2zM707 226v2h1v-2zM708 226v2h1v-2zM709 226v2h1v-2zM710 226v2h1v-2zM711 225v2h1v-2zM712 225v2h1v-2zM713 225v2h1v-2zM714 226v2h1v-2zM715 226v2h1v-2zM716 226v2h1v-2zM717 226v2h1v-2zM718 225v2h1v-2zM719 225v2h1v-2zM720 226v1h1v-1zM721 226v1h1v-1zM722 226v1h1v-1zM723 226v1h1v-1zM724 226v1h1v-1zM725 226v1h1v-1zM726 226v1h1v-1zM727 226v1h1v-1zM728 226v1h1v-1zM729 226v1h1v-1zM730 226v1h1v-1zM731 226v1h1v-1zM732 226v1h1v-1zM733 226v1h1v-1zM734 226v1h1v-1zM735 226v1h1v-1zM736 226v1h1v-1zM737 226v1h1v-1zM738 226v1h1v-1zM739 226v1h1v-1zM740 226v1h1v-1zM741 226v1h1v-1zM742 226v1h1v-1zM743 226v1h1v-1zM744 226v1h1v-1zM745 226v1h1v-1zM746 226v1h1v-1zM747 226v1h1v-1zM748 226v1h1v-1zM749 226v1h1v-1zM750 226v1h1v-1zM751 226v1h1v-1zM752 226v1h1v-1zM753 226v1h1v-1zM754 226v1h1v-1zM755 226v1h1v-1zM756 226v1h1v-1zM757 226v1h1v-1zM758 226v1h1v-1zM759 226v1h1v-1zM760 226v1h1v-1zM761 226v1h1v-1zM762 226v1h1v-1zM763 226v1h1v-1zM764 226v1h1v-1zM765 226v1h1v-1zM766 226v1h1v-1zM767 226v1h1v-1zM768 226v1h1v-1zM769 226v1h1v-1zM770 226v1h1v-1zM771 226v1h1v-1zM772 226v1h1v-1zM773 226v1h1v-1zM774 226v1h1v-1zM775 226v1h1v-1zM776 226v1h1v-1zM777 226v1h1v-1zM778 226v1h1v-1zM779 226v1h1v-1zM780 226v1h1v-1zM781 226v1h1v-1zM782 226v1h1v-1zM783 226v1h1v-1zM784 226v1h1v-1zM785 226v1h1v-1zM786 226v1h1v-1zM787 226v1h1v-1zM788 226v1h1v-1zM789 226v1h1v-1zM790 226v1h1v-1zM791 226v1h1v-1zM792 226v1h1v-1zM793 226v1h1v-1zM794 226v1h1v-1zM795 226v1h1v-1zM796 226v1h1v-1zM797 226v1h1v-1zM798 226v1h1v-1zM799 226v1h1v-1zM800 226v1h1v-1zM801 226v1h1v-1zM802 226v1h1v-1zM803 226v1h1v-1zM804 226v1h1v-1zM805 226v1h1v-1zM806 226v1h1v-1zM807 226v1h1v-1zM808 226v1h1v-1zM809 226v1h1v-1zM810 226v1h1v-1zM811 226v1h1v-1zM812 226v1h1v-1zM813 226v1h1v-1zM814 226v1h1v-1zM815 226v1h1v-1zM816 226v1h1v-1zM817 226v1h1v-1zM818 226v1h1v-1zM819 226v1h1v-1zM820 226v1h1v-1zM821 226v1h1v-1zM822 226v1h1v-1zM823 226v1h1v-1zM824 226v1h1v-1zM825 226v1h1v-1zM826 226v1h1v-1zM827 226v1h1v-1zM828 226v1h1v-1zM829 226v1h1v-1zM830 226v1h1v-1zM831 226v1h1v-1zM832 226v1h1v-1zM833 226v1h1v-1zM834 226v1h1v-1zM835 226v1h1v-1zM836 226v1h1v-1zM837 226v1h1v-1zM838 226v1h1v-1zM839 226v1h1v-1zM840 226v1h1v-1zM841 226v1h1v-1zM842 226v1h1v-1zM843 226v1h1v-1zM844 226v1h1v-1zM845 226v1h1v-1zM846 226v1h1v-1zM847 226v1h1v-1zM848 226v1h1v-1zM849 226v1h1v-1zM850 226v1h1v-1zM851 226v1h1v-1zM852 226v1h1v-1zM853 226v1h1v-1zM854 226v1h1v-1zM855 226v1h1v-1zM856 226v1h1v-1zM857 226v1h1v-1zM858 226v1h1v-1zM859 226v1h1v-1zM860 226v1h1v-1zM861 226v1h1v-1zM862 226v1h1v-1zM863 226v1h1v-1zM864 226v1h1v-1zM865 226v1h1v-1zM866 226v1h1v-1zM867 226v1h1v-1zM868 226v1h1v-1zM869 226v1h1v-1zM870 226v1h1v-1zM871 226v1h1v-1zM872 226v1h1v-1zM873 226v1h1v-1zM874 226v1h1v-1zM875 226v1h1v-1zM876 226v1h1v-1zM877 226v1h1v-1zM878 226v1h1v-1zM879 226v1h1v-1zM880 226v1h1v-1zM881 226v1h1v-1zM882 226v1h1v-1zM883 226v1h1v-1zM884 226v1h1v-1zM885 226v1h1v-1zM886 226v1h1v-1zM887 226v1h1v-1zM888 226v1h1v-1zM889 226v1h1v-1zM890 226v1h1v-1zM891 226v1h1v-1zM892 226v1h1v-1zM893 226v1h1v-1zM894 226v1h1v-1zM895 226v1h1v-1zM896 226v1h1v-1zM897 226v1h1v-1zM898 226v1h1v-1zM899 226v1h1v-1zM900 226v1h1v-1zM901 226v1h1v-1zM902 226v1h1v-1zM903 226v1h1v-1zM904 226v1h1v-1zM905 226v1h1v-1zM906 226v1h1v-1zM907 226v1h1v-1zM908 226v1h1v-1zM909 226v1h1v-1zM910 226v1h1v-1zM911 226v1h1v-1zM912 226v1h1v-1zM913 226v1h1v-1zM914 226v1h1v-1zM915 226v1h1v-1zM916 226v1h1v-1zM917 226v1h1v-1zM918 226v1h1v-1zM919 226v1h1v-1zM920 226v1h1v-1zM921 226v1h1v-1zM922 226v1h1v-1zM923 226v1h1v-1zM924 226v1h1v-1zM925 226v1h1v-1zM926 226v1h1v-1zM927 226v1h1v-1zM928 226v1h1v-1zM929 226v1h1v-1zM930 226v1h1v-1zM931 226v1h1v-1zM932 226v1h1v-1zM933 226v1h1v-1zM934 226v1h1v-1zM935 226v1h1v-1zM936 226v1h1v-1zM937 226v1h1v-1zM938 226v1h1v-1zM939 226v1h1v-1zM940 226v1h1v-1zM941 226v1h1v-1zM942 226v1h1v-1zM943 226v1h1v-1zM944 226v1h1v-1zM945 226v1h1v-1zM946 226v1h1v-1zM947 226v1h1v-1zM948 226v1h1v-1zM949 226v1h1v-1zM950 226v1h1v-1zM951 226v1h1v-1z" fill="#00ffff"/><path d="M88 228v1h1v-1zM89 227v2h1v-2zM90 229v1h1v-1zM91 225v5h1v-5zM92 224v3h1v-3zM93 227v7h1v-7zM94 226v7h1v-7zM95 221v5h1v-5zM96 223v12h1v-12zM97 231v6h1v-6zM98 220v11h1v-11zM99 218v15h1v-15zM100 233v8h1v-8zM101 216v22h1v-22zM102 214v10h1v-10zM103 224v17h1v-17zM104 222v22h1v-22zM105 211v11h1v-11zM106 214v21h1v-21zM107 235v12h1v-12zM108 211v24h1v-24zM109 207v29h1v-29zM110 236v15h1v-15zM111 220v27h1v-27zM112 204v16h1v-16zM113 220v30h1v-30zM114 237v17h1v-17zM115 201v36h1v-36zM116 205v34h1v-34zM117 238v20h1v-20zM118 202v36h1v-36zM119 197v21h1v-21zM120 218v43h1v-43zM121 216v40h1v-40zM122 194v22h1v-22zM123 199v60h1v-60zM124 241v23h1v-23zM125 190v51h1v-51zM126 196v46h1v-46zM127 242v26h1v-26zM128 193v69h1v-69zM129 187v27h1v-27zM130 214v51h1v-51zM131 213v58h1v-58zM132 184v29h1v-29zM133 191v77h1v-77zM134 245v30h1v-30zM135 187v58h1v-58zM136 180v66h1v-66zM137 246v32h1v-32zM138 210v60h1v-60zM139 177v33h1v-33zM140 210v63h1v-63zM141 209v72h1v-72zM142 173v36h1v-36zM143 182v66h1v-66zM144 248v37h1v-37zM145 179v69h1v-69zM146 170v38h1v-38zM147 208v80h1v-80zM148 207v72h1v-72zM149 167v40h1v-40zM150 207v75h1v-75zM151 251v41h1v-41zM152 163v88h1v-88zM153 173v79h1v-79zM154 252v43h1v-43zM155 170v115h1v-115zM156 160v44h1v-44zM157 204v94h1v-94zM158 203v84h1v-84zM159 156v47h1v-47zM160 167v124h1v-124zM161 254v48h1v-48zM162 153v101h1v-101zM163 165v91h1v-91zM164 256v49h1v-49zM165 162v131h1v-131zM166 150v51h1v-51zM167 201v96h1v-96zM168 199v110h1v-110zM169 146v53h1v-53zM170 159v140h1v-140zM171 258v54h1v-54zM172 156v102h1v-102zM173 143v116h1v-116zM174 259v56h1v-56zM175 197v105h1v-105zM176 139v58h1v-58zM177 197v108h1v-108zM178 196v123h1v-123zM179 136v60h1v-60zM180 150v112h1v-112zM181 261v61h1v-61zM182 147v114h1v-114zM183 133v62h1v-62zM184 195v131h1v-131zM185 193v118h1v-118zM186 129v65h1v-65zM187 194v120h1v-120zM188 264v65h1v-65zM189 126v138h1v-138zM190 141v124h1v-124zM191 265v67h1v-67zM192 138v178h1v-178zM193 122v69h1v-69zM194 191v145h1v-145zM195 190v130h1v-130zM196 119v71h1v-71zM197 136v187h1v-187zM198 267v72h1v-72zM199 133v134h1v-134zM200 116v153h1v-153zM201 269v74h1v-74zM202 129v197h1v-197zM203 112v76h1v-76zM204 188v140h1v-140zM205 186v160h1v-160zM206 109v77h1v-77zM207 127v144h1v-144zM208 271v78h1v-78zM209 124v147h1v-147zM210 105v167h1v-167zM211 272v81h1v-81zM212 184v150h1v-150zM213 102v82h1v-82zM214 184v153h1v-153zM215 273v83h1v-83zM216 99v174h1v-174zM217 118v157h1v-157zM218 275v85h1v-85zM219 115v160h1v-160zM220 95v87h1v-87zM221 182v181h1v-181zM222 180v163h1v-163zM223 92v88h1v-88zM224 112v234h1v-234zM225 277v89h1v-89zM226 88v189h1v-189zM227 109v169h1v-169zM228 278v92h1v-92zM229 106v243h1v-243zM230 85v93h1v-93zM231 178v174h1v-174zM232 177v196h1v-196zM233 82v95h1v-95zM234 104v251h1v-251zM235 281v96h1v-96zM236 100v181h1v-181zM237 78v204h1v-204zM238 282v98h1v-98zM239 98v259h1v-259zM240 75v99h1v-99zM241 174v186h1v-186zM242 173v210h1v-210zM243 71v102h1v-102zM244 95v189h1v-189zM245 284v103h1v-103zM246 92v192h1v-192zM247 68v218h1v-218zM248 286v104h1v-104zM249 171v195h1v-195zM250 65v106h1v-106zM251 171v198h1v-198zM252 287v107h1v-107zM253 61v226h1v-226zM254 86v202h1v-202zM255 288v109h1v-109zM256 83v205h1v-205zM257 58v110h1v-110zM258 168v232h1v-232zM259 167v207h1v-207zM260 54v113h1v-113zM261 80v298h1v-298zM262 290v114h1v-114zM263 51v239h1v-239zM264 77v215h1v-215zM265 292v115h1v-115zM266 75v305h1v-305zM267 48v117h1v-117zM268 165v219h1v-219zM269 163v248h1v-248zM270 44v119h1v-119zM271 72v314h1v-314zM272 294v120h1v-120zM273 69v225h1v-225zM274 41v254h1v-254zM275 295v122h1v-122zM276 161v228h1v-228zM277 37v124h1v-124zM278 161v231h1v-231zM279 160v261h1v-261zM280 34v126h1v-126zM281 63v235h1v-235zM282 297v127h1v-127zM283 60v237h1v-237zM284 31v128h1v-128zM285 159v269h1v-269zM286 157v241h1v-241zM287 27v131h1v-131zM288 158v243h1v-243zM289 300v131h1v-131zM290 24v276h1v-276zM291 54v247h1v-247zM292 301v133h1v-133zM293 51v353h1v-353zM294 20v135h1v-135zM295 155v283h1v-283zM296 154v253h1v-253zM297 17v137h1v-137zM298 48v362h1v-362zM299 303v138h1v-138zM300 46v257h1v-257zM301 14v291h1v-291zM302 305v140h1v-140zM303 42v371h1v-371zM304 10v142h1v-142zM305 152v261h1v-261zM306 152v293h1v-293zM307 14v138h1v-138zM308 46v258h1v-258zM309 303v138h1v-138zM310 48v255h1v-255zM311 17v286h1v-286zM312 303v135h1v-135zM313 155v251h1v-251zM314 20v135h1v-135zM315 155v249h1v-249zM316 156v278h1v-278zM317 24v132h1v-132zM318 55v245h1v-245zM319 300v131h1v-131zM320 57v243h1v-243zM321 27v131h1v-131zM322 158v270h1v-270zM323 158v240h1v-240zM324 31v128h1v-128zM325 159v236h1v-236zM326 297v127h1v-127zM327 34v263h1v-263zM328 63v234h1v-234zM329 297v124h1v-124zM330 65v327h1v-327zM331 37v124h1v-124zM332 161v256h1v-256zM333 162v227h1v-227zM334 41v121h1v-121zM335 69v318h1v-318zM336 293v121h1v-121zM337 71v222h1v-222zM338 44v249h1v-249zM339 293v118h1v-118zM340 74v309h1v-309zM341 48v117h1v-117zM342 165v216h1v-216zM343 165v242h1v-242zM344 51v114h1v-114zM345 78v213h1v-213zM346 290v114h1v-114zM347 80v210h1v-210zM348 54v235h1v-235zM349 289v111h1v-111zM350 168v206h1v-206zM351 58v111h1v-111zM352 169v203h1v-203zM353 287v110h1v-110zM354 61v226h1v-226zM355 86v201h1v-201zM356 286v108h1v-108zM357 89v197h1v-197zM358 65v106h1v-106zM359 171v219h1v-219zM360 171v195h1v-195zM361 68v103h1v-103zM362 92v272h1v-272zM363 284v103h1v-103zM364 71v213h1v-213zM365 95v188h1v-188zM366 283v100h1v-100zM367 97v263h1v-263zM368 75v100h1v-100zM369 175v183h1v-183zM370 175v205h1v-205zM371 78v97h1v-97zM372 101v254h1v-254zM373 280v97h1v-97zM374 103v177h1v-177zM375 82v198h1v-198zM376 280v93h1v-93zM377 177v174h1v-174zM378 85v93h1v-93zM379 178v171h1v-171zM380 179v191h1v-191zM381 88v91h1v-91zM382 109v168h1v-168zM383 277v89h1v-89zM384 112v165h1v-165zM385 92v89h1v-89zM386 181v182h1v-182zM387 181v161h1v-161zM388 95v87h1v-87zM389 182v159h1v-159zM390 274v86h1v-86zM391 99v175h1v-175zM392 119v155h1v-155zM393 273v83h1v-83zM394 121v152h1v-152zM395 102v82h1v-82zM396 184v169h1v-169zM397 185v149h1v-149zM398 105v80h1v-80zM399 124v207h1v-207zM400 271v78h1v-78zM401 109v162h1v-162zM402 127v143h1v-143zM403 270v76h1v-76zM404 129v199h1v-199zM405 112v76h1v-76zM406 188v138h1v-138zM407 188v155h1v-155zM408 116v72h1v-72zM409 133v190h1v-190zM410 267v72h1v-72zM411 135v132h1v-132zM412 119v148h1v-148zM413 267v69h1v-69zM414 191v128h1v-128zM415 122v70h1v-70zM416 192v125h1v-125zM417 192v140h1v-140zM418 126v66h1v-66zM419 142v122h1v-122zM420 263v66h1v-66zM421 144v119h1v-119zM422 129v65h1v-65zM423 194v132h1v-132zM424 194v117h1v-117zM425 133v62h1v-62zM426 195v113h1v-113zM427 261v61h1v-61zM428 136v125h1v-125zM429 150v111h1v-111zM430 261v58h1v-58zM431 152v153h1v-153zM432 139v59h1v-59zM433 198v117h1v-117zM434 198v104h1v-104zM435 143v55h1v-55zM436 156v144h1v-144zM437 257v55h1v-55zM438 158v99h1v-99zM439 146v111h1v-111zM440 257v52h1v-52zM441 161v135h1v-135zM442 150v51h1v-51zM443 201v93h1v-93zM444 202v103h1v-103zM445 153v49h1v-49zM446 165v90h1v-90zM447 254v48h1v-48zM448 167v87h1v-87zM449 156v97h1v-97zM450 253v45h1v-45zM451 204v83h1v-83zM452 160v45h1v-45zM453 205v80h1v-80zM454 251v44h1v-44zM455 163v88h1v-88zM456 173v78h1v-78zM457 250v42h1v-42zM458 176v74h1v-74zM459 167v40h1v-40zM460 207v81h1v-81zM461 208v71h1v-71zM462 170v38h1v-38zM463 179v98h1v-98zM464 248v37h1v-37zM465 173v75h1v-75zM466 182v65h1v-65zM467 247v34h1v-34zM468 184v89h1v-89zM469 177v34h1v-34zM470 211v60h1v-60zM471 211v67h1v-67zM472 180v31h1v-31zM473 188v80h1v-80zM474 244v31h1v-31zM475 190v54h1v-54zM476 184v60h1v-60zM477 244v27h1v-27zM478 193v71h1v-71zM479 187v27h1v-27zM480 214v48h1v-48zM481 215v53h1v-53zM482 190v25h1v-25zM483 197v44h1v-44zM484 241v23h1v-23zM485 199v42h1v-42zM486 194v46h1v-46zM487 240v21h1v-21zM488 217v38h1v-38zM489 197v21h1v-21zM490 218v35h1v-35zM491 238v20h1v-20zM492 201v37h1v-37zM493 206v32h1v-32zM494 237v17h1v-17zM495 208v29h1v-29zM496 204v16h1v-16zM497 220v31h1v-31zM498 221v26h1v-26zM499 207v14h1v-14zM500 211v33h1v-33zM501 235v12h1v-12zM502 211v24h1v-24zM503 214v20h1v-20zM504 234v10h1v-10zM505 216v25h1v-25zM506 214v10h1v-10zM507 224v15h1v-15zM508 224v17h1v-17zM509 218v6h1v-6zM510 220v16h1v-16zM511 231v6h1v-6zM512 222v9h1v-9zM513 221v10h1v-10zM514 231v3h1v-3zM515 227v5h1v-5zM516 224v4h1v-4zM517 228v2h1v-2zM518 228v2h1v-2zM519 227v2h1v-2zM520 227v2h1v-2zM521 229v1h1v-1zM522 225v4h1v-4zM523 224v3h1v-3zM524 227v7h1v-7zM525 226v7h1v-7zM526 221v5h1v-5zM527 226v9h1v-9zM528 231v6h1v-6zM529 218v13h1v-13zM530 220v13h1v-13zM531 233v8h1v-8zM532 216v22h1v-22zM533 214v10h1v-10zM534 224v20h1v-20zM535 222v19h1v-19zM536 211v11h1v-11zM537 214v30h1v-30zM538 235v12h1v-12zM539 211v24h1v-24zM540 207v29h1v-29zM541 236v15h1v-15zM542 208v39h1v-39zM543 204v16h1v-16zM544 220v30h1v-30zM545 219v35h1v-35zM546 201v18h1v-18zM547 205v34h1v-34zM548 238v20h1v-20zM549 202v36h1v-36zM550 197v43h1v-43zM551 240v21h1v-21zM552 216v40h1v-40zM553 194v22h1v-22zM554 216v43h1v-43zM555 215v49h1v-49zM556 190v25h1v-25zM557 196v46h1v-46zM558 242v26h1v-26zM559 193v49h1v-49zM560 187v27h1v-27zM561 214v57h1v-57zM562 213v51h1v-51zM563 184v29h1v-29zM564 213v55h1v-55zM565 245v30h1v-30zM566 180v65h1v-65zM567 188v58h1v-58zM568 246v32h1v-32zM569 185v85h1v-85zM570 177v33h1v-33zM571 210v71h1v-71zM572 209v64h1v-64zM573 173v36h1v-36zM574 182v94h1v-94zM575 248v37h1v-37zM576 179v69h1v-69zM577 170v80h1v-80zM578 250v38h1v-38zM579 176v103h1v-103zM580 167v40h1v-40zM581 207v75h1v-75zM582 205v87h1v-87zM583 163v42h1v-42zM584 173v79h1v-79zM585 252v43h1v-43zM586 170v82h1v-82zM587 160v93h1v-93zM588 253v45h1v-45zM589 203v84h1v-84zM590 156v47h1v-47zM591 203v88h1v-88zM592 254v48h1v-48zM593 153v101h1v-101zM594 165v91h1v-91zM595 255v50h1v-50zM596 162v93h1v-93zM597 150v51h1v-51zM598 201v108h1v-108zM599 199v98h1v-98zM600 146v53h1v-53zM601 159v140h1v-140zM602 258v54h1v-54zM603 143v115h1v-115zM604 156v103h1v-103zM605 259v56h1v-56zM606 153v149h1v-149zM607 139v58h1v-58zM608 197v108h1v-108zM609 196v123h1v-123zM610 136v60h1v-60zM611 150v158h1v-158zM612 261v61h1v-61zM613 147v114h1v-114zM614 133v130h1v-130zM615 263v63h1v-63zM616 193v118h1v-118zM617 129v65h1v-65zM618 194v120h1v-120zM619 192v137h1v-137zM620 126v66h1v-66zM621 141v124h1v-124zM622 265v67h1v-67zM623 138v127h1v-127zM624 122v69h1v-69zM625 191v145h1v-145zM626 190v130h1v-130zM627 119v71h1v-71zM628 190v133h1v-133zM629 267v72h1v-72zM630 116v151h1v-151zM631 133v136h1v-136zM632 269v74h1v-74zM633 129v140h1v-140zM634 112v76h1v-76zM635 188v158h1v-158zM636 186v142h1v-142zM637 109v77h1v-77zM638 127v204h1v-204zM639 271v78h1v-78zM640 105v166h1v-166zM641 124v148h1v-148zM642 272v81h1v-81zM643 121v213h1v-213zM644 102v82h1v-82zM645 184v153h1v-153zM646 183v173h1v-173zM647 99v84h1v-84zM648 118v222h1v-222zM649 275v85h1v-85zM650 115v160h1v-160zM651 95v181h1v-181zM652 276v87h1v-87zM653 180v163h1v-163zM654 92v88h1v-88zM655 180v166h1v-166zM656 179v187h1v-187zM657 88v91h1v-91zM658 109v169h1v-169zM659 278v92h1v-92zM660 106v172h1v-172zM661 85v93h1v-93zM662 178v195h1v-195zM663 177v174h1v-174zM664 82v95h1v-95zM665 177v178h1v-178zM666 281v96h1v-96zM667 78v203h1v-203zM668 101v181h1v-181zM669 282v98h1v-98zM670 98v259h1v-259zM671 75v99h1v-99zM672 174v209h1v-209zM673 173v187h1v-187zM674 71v102h1v-102zM675 95v268h1v-268zM676 284v103h1v-103zM677 92v192h1v-192zM678 68v218h1v-218zM679 286v104h1v-104zM680 89v277h1v-277zM681 65v106h1v-106zM682 171v198h1v-198zM683 169v225h1v-225zM684 61v108h1v-108zM685 86v202h1v-202zM686 288v109h1v-109zM687 83v205h1v-205zM688 58v231h1v-231zM689 289v111h1v-111zM690 167v207h1v-207zM691 54v113h1v-113zM692 167v211h1v-211zM693 290v114h1v-114zM694 51v239h1v-239zM695 77v215h1v-215zM696 291v116h1v-116zM697 75v216h1v-216zM698 48v117h1v-117zM699 165v246h1v-246zM700 163v221h1v-221zM701 44v119h1v-119zM702 72v314h1v-314zM703 294v120h1v-120zM704 41v253h1v-253zM705 69v226h1v-226zM706 295v122h1v-122zM707 65v324h1v-324zM708 37v124h1v-124zM709 161v260h1v-260zM710 160v232h1v-232zM711 34v126h1v-126zM712 63v332h1v-332zM713 297v127h1v-127zM714 60v237h1v-237zM715 31v268h1v-268zM716 299v129h1v-129zM717 57v341h1v-341zM718 27v131h1v-131zM719 158v243h1v-243zM720 156v275h1v-275zM721 24v132h1v-132zM722 54v247h1v-247zM723 301v133h1v-133zM724 51v250h1v-250zM725 20v282h1v-282zM726 302v136h1v-136zM727 154v253h1v-253zM728 17v137h1v-137zM729 154v256h1v-256zM730 303v138h1v-138zM731 14v289h1v-289zM732 46v259h1v-259zM733 305v140h1v-140zM734 42v263h1v-263zM735 10v142h1v-142zM736 152v293h1v-293zM737 152v260h1v-260zM738 14v138h1v-138zM739 46v364h1v-364zM740 303v138h1v-138zM741 17v286h1v-286zM742 49v254h1v-254zM743 303v135h1v-135zM744 51v355h1v-355zM745 20v135h1v-135zM746 155v249h1v-249zM747 156v278h1v-278zM748 24v132h1v-132zM749 55v346h1v-346zM750 300v131h1v-131zM751 57v243h1v-243zM752 27v272h1v-272zM753 299v129h1v-129zM754 158v240h1v-240zM755 31v128h1v-128zM756 159v236h1v-236zM757 159v265h1v-265zM758 34v125h1v-125zM759 63v234h1v-234zM760 296v125h1v-125zM761 65v231h1v-231zM762 37v124h1v-124zM763 161v256h1v-256zM764 162v227h1v-227zM765 41v122h1v-122zM766 163v224h1v-224zM767 293v121h1v-121zM768 44v249h1v-249zM769 72v221h1v-221zM770 293v118h1v-118zM771 74v309h1v-309zM772 48v117h1v-117zM773 165v242h1v-242zM774 165v215h1v-215zM775 51v114h1v-114zM776 78v300h1v-300zM777 290v114h1v-114zM778 80v210h1v-210zM779 54v235h1v-235zM780 289v111h1v-111zM781 83v291h1v-291zM782 58v111h1v-111zM783 169v203h1v-203zM784 169v228h1v-228zM785 61v108h1v-108zM786 86v284h1v-284zM787 286v108h1v-108zM788 89v197h1v-197zM789 65v221h1v-221zM790 286v104h1v-104zM791 171v195h1v-195zM792 68v104h1v-104zM793 172v192h1v-192zM794 173v214h1v-214zM795 71v102h1v-102zM796 95v188h1v-188zM797 283v100h1v-100zM798 97v186h1v-186zM799 75v100h1v-100zM800 175v205h1v-205zM801 175v182h1v-182zM802 78v98h1v-98zM803 176v179h1v-179zM804 280v97h1v-97zM805 82v198h1v-198zM806 104v176h1v-176zM807 280v93h1v-93zM808 106v245h1v-245zM809 85v93h1v-93zM810 178v192h1v-192zM811 179v169h1v-169zM812 88v91h1v-91zM813 109v237h1v-237zM814 277v89h1v-89zM815 112v165h1v-165zM816 92v184h1v-184zM817 276v87h1v-87zM818 115v227h1v-227zM819 95v87h1v-87zM820 182v159h1v-159zM821 182v178h1v-178zM822 99v83h1v-83zM823 119v155h1v-155zM824 273v83h1v-83zM825 121v152h1v-152zM826 102v171h1v-171zM827 273v80h1v-80zM828 185v149h1v-149zM829 105v81h1v-81zM830 186v145h1v-145zM831 271v78h1v-78zM832 109v162h1v-162zM833 127v143h1v-143zM834 269v77h1v-77zM835 129v140h1v-140zM836 112v76h1v-76zM837 188v155h1v-155zM838 188v137h1v-137zM839 116v72h1v-72zM840 133v190h1v-190zM841 267v72h1v-72zM842 119v148h1v-148zM843 136v131h1v-131zM844 267v69h1v-69zM845 138v181h1v-181zM846 122v70h1v-70zM847 192v125h1v-125zM848 192v140h1v-140zM849 126v66h1v-66zM850 142v172h1v-172zM851 263v66h1v-66zM852 144v119h1v-119zM853 129v134h1v-134zM854 263v63h1v-63zM855 194v117h1v-117zM856 133v62h1v-62zM857 195v113h1v-113zM858 196v126h1v-126zM859 136v60h1v-60zM860 150v111h1v-111zM861 260v59h1v-59zM862 152v108h1v-108zM863 139v120h1v-120zM864 259v56h1v-56zM865 198v104h1v-104zM866 143v56h1v-56zM867 199v101h1v-101zM868 257v55h1v-55zM869 146v111h1v-111zM870 159v98h1v-98zM871 256v53h1v-53zM872 161v95h1v-95zM873 150v51h1v-51zM874 201v104h1v-104zM875 202v91h1v-91zM876 153v49h1v-49zM877 165v126h1v-126zM878 254v48h1v-48zM879 156v98h1v-98zM880 168v85h1v-85zM881 253v45h1v-45zM882 170v117h1v-117zM883 160v45h1v-45zM884 205v80h1v-80zM885 205v90h1v-90zM886 163v42h1v-42zM887 173v110h1v-110zM888 250v42h1v-42zM889 176v74h1v-74zM890 167v83h1v-83zM891 250v38h1v-38zM892 208v71h1v-71zM893 170v38h1v-38zM894 208v69h1v-69zM895 209v76h1v-76zM896 173v36h1v-36zM897 182v65h1v-65zM898 247v34h1v-34zM899 184v63h1v-63zM900 177v34h1v-34zM901 211v67h1v-67zM902 211v59h1v-59zM903 180v32h1v-32zM904 212v56h1v-56zM905 244v31h1v-31zM906 184v60h1v-60zM907 191v53h1v-53zM908 244v27h1v-27zM909 193v71h1v-71zM910 187v27h1v-27zM911 214v54h1v-54zM912 215v46h1v-46zM913 190v25h1v-25zM914 197v62h1v-62zM915 241v23h1v-23zM916 199v42h1v-42zM917 194v46h1v-46zM918 240v21h1v-21zM919 202v53h1v-53zM920 197v21h1v-21zM921 218v35h1v-35zM922 218v40h1v-40zM923 201v17h1v-17zM924 206v32h1v-32zM925 237v17h1v-17zM926 208v29h1v-29zM927 204v33h1v-33zM928 237v14h1v-14zM929 221v26h1v-26zM930 207v15h1v-15zM931 222v22h1v-22zM932 235v12h1v-12zM933 211v24h1v-24zM934 214v20h1v-20zM935 233v11h1v-11zM936 216v17h1v-17zM937 214v10h1v-10zM938 224v17h1v-17zM939 224v14h1v-14zM940 218v6h1v-6zM941 220v16h1v-16zM942 231v6h1v-6zM943 221v10h1v-10zM944 223v8h1v-8zM945 231v3h1v-3zM946 225v7h1v-7zM947 224v4h1v-4zM948 228v2h1v-2zM949 228v2h1v-2zM950 227v2h1v-2z" fill="#ffff00"/><rect x="58" y="11" width="2" height="438.6" fill="#fff"/><rect x="58" y="447.6" width="892.5999999999999" height="2" fill="#fff"/><path d="M53 28.5H58M53 45.5H58M53 62.5H58M53 79.5H58M53 96.5H58M53 113.5H58M53 130.5H58M53 147.5H58M53 164.5H58M53 181.5H58M53 198.5H58M53 215.5H58M53 232.5H58M53 249.5H58M53 266.5H58M53 283.5H58M53 300.5H58M53 317.5H58M53 334.5H58M53 351.5H58M53 368.5H58M53 385.5H58M53 402.5H58M53 419.5H58M53 436.5H58" stroke="#b0b0b0" stroke-width="1" fill="none"/><path d="M57 15.5H58M57 19.5H58M57 24.5H58M57 32.5H58M57 37.5H58M57 41.5H58M57 49.5H58M57 53.5H58M57 58.5H58M57 66.5H58M57 71.5H58M57 75.5H58M57 83.5H58M57 87.5H58M57 92.5H58M57 100.5H58M57 105.5H58M57 109.5H58M57 117.5H58M57 121.5H58M57 126.5H58M57 134.5H58M57 139.5H58M57 143.5H58M57 151.5H58M57 155.5H58M57 160.5H58M57 168.5H58M57 173.5H58M57 177.5H58M57 185.5H58M57 189.5H58M57 194.5H58M57 202.5H58M57 207.5H58M57 211.5H58M57 219.5H58M57 223.5H58M57 228.5H58M57 236.5H58M57 241.5H58M57 245.5H58M57 253.5H58M57 257.5H58M57 262.5H58M57 270.5H58M57 275.5H58M57 279.5H58M57 287.5H58M57 291.5H58M57 296.5H58M57 304.5H58M57 309.5H58M57 313.5H58M57 321.5H58M57 325.5H58M57 330.5H58M57 338.5H58M57 343.5H58M57 347.5H58M57 355.5H58M57 359.5H58M57 364.5H58M57 372.5H58M57 377.5H58M57 381.5H58M57 389.5H58M57 393.5H58M57 398.5H58M57 406.5H58M57 411.5H58M57 415.5H58M57 423.5H58M57 427.5H58M57 432.5H58M57 440.5H58M57 445.5H58" stroke="#9a9a9a" stroke-width="1" fill="none"/><rect x="71" y="449.6" width="1" height="7" fill="#d8d8d8"/><rect x="87.5" y="449.6" width="1.6" height="8" fill="#fff"/><rect x="105" y="449.6" width="1" height="7" fill="#d8d8d8"/><rect x="122" y="449.6" width="1" height="7" fill="#d8d8d8"/><rect x="139" y="449.6" width="1" height="7" fill="#d8d8d8"/><rect x="156" y="449.6" width="1" height="7" fill="#d8d8d8"/><rect x="172.5" y="449.6" width="1.6" height="8" fill="#fff"/><rect x="189" y="449.6" width="1" height="7" fill="#d8d8d8"/><rect x="206" y="449.6" width="1" height="7" fill="#d8d8d8"/><rect x="223" y="449.6" width="1" height="7" fill="#d8d8d8"/><rect x="240" y="449.6" width="1" height="7" fill="#d8d8d8"/><rect x="256.5" y="449.6" width="1.6" height="8" fill="#fff"/><rect x="273" y="449.6" width="1" height="7" fill="#d8d8d8"/><rect x="290" y="449.6" width="1" height="7" fill="#d8d8d8"/><rect x="307" y="449.6" width="1" height="7" fill="#d8d8d8"/><rect x="324" y="449.6" width="1" height="7" fill="#d8d8d8"/><rect x="340.5" y="449.6" width="1.6" height="8" fill="#fff"/><rect x="358" y="449.6" width="1" height="7" fill="#d8d8d8"/><rect x="375" y="449.6" width="1" height="7" fill="#d8d8d8"/><rect x="391" y="449.6" width="1" height="7" fill="#d8d8d8"/><rect x="408" y="449.6" width="1" height="7" fill="#d8d8d8"/><rect x="424.5" y="449.6" width="1.6" height="8" fill="#fff"/><rect x="442" y="449.6" width="1" height="7" fill="#d8d8d8"/><rect x="459" y="449.6" width="1" height="7" fill="#d8d8d8"/><rect x="476" y="449.6" width="1" height="7" fill="#d8d8d8"/><rect x="492" y="449.6" width="1" height="7" fill="#d8d8d8"/><rect x="508.5" y="449.6" width="1.6" height="8" fill="#fff"/><rect x="526" y="449.6" width="1" height="7" fill="#d8d8d8"/><rect x="543" y="449.6" width="1" height="7" fill="#d8d8d8"/><rect x="560" y="449.6" width="1" height="7" fill="#d8d8d8"/><rect x="577" y="449.6" width="1" height="7" fill="#d8d8d8"/><rect x="593.5" y="449.6" width="1.6" height="8" fill="#fff"/><rect x="610" y="449.6" width="1" height="7" fill="#d8d8d8"/><rect x="627" y="449.6" width="1" height="7" fill="#d8d8d8"/><rect x="644" y="449.6" width="1" height="7" fill="#d8d8d8"/><rect x="661" y="449.6" width="1" height="7" fill="#d8d8d8"/><rect x="677.5" y="449.6" width="1.6" height="8" fill="#fff"/><rect x="695" y="449.6" width="1" height="7" fill="#d8d8d8"/><rect x="712" y="449.6" width="1" height="7" fill="#d8d8d8"/><rect x="728" y="449.6" width="1" height="7" fill="#d8d8d8"/><rect x="745" y="449.6" width="1" height="7" fill="#d8d8d8"/><rect x="761.5" y="449.6" width="1.6" height="8" fill="#fff"/><rect x="779" y="449.6" width="1" height="7" fill="#d8d8d8"/><rect x="796" y="449.6" width="1" height="7" fill="#d8d8d8"/><rect x="813" y="449.6" width="1" height="7" fill="#d8d8d8"/><rect x="830" y="449.6" width="1" height="7" fill="#d8d8d8"/><rect x="845.5" y="449.6" width="1.6" height="8" fill="#fff"/><rect x="863" y="449.6" width="1" height="7" fill="#d8d8d8"/><rect x="880" y="449.6" width="1" height="7" fill="#d8d8d8"/><rect x="897" y="449.6" width="1" height="7" fill="#d8d8d8"/><rect x="914" y="449.6" width="1" height="7" fill="#d8d8d8"/><rect x="929.5" y="449.6" width="1.6" height="8" fill="#fff"/><rect x="947" y="449.6" width="1" height="7" fill="#d8d8d8"/></svg>
<span class="t" style="top:21.6px;line-height:12px;height:12px;font-size:10.7px;color:#f0f0f0;white-space:pre;letter-spacing:-0.05px;left:-251.6px;width:300px;text-align:right;">235.011</span>
<span class="t" style="top:38.6px;line-height:12px;height:12px;font-size:10.7px;color:#f0f0f0;white-space:pre;letter-spacing:-0.05px;left:-251.6px;width:300px;text-align:right;">215.011</span>
<span class="t" style="top:55.6px;line-height:12px;height:12px;font-size:10.7px;color:#f0f0f0;white-space:pre;letter-spacing:-0.05px;left:-251.6px;width:300px;text-align:right;">195.011</span>
<span class="t" style="top:72.6px;line-height:12px;height:12px;font-size:10.7px;color:#f0f0f0;white-space:pre;letter-spacing:-0.05px;left:-251.6px;width:300px;text-align:right;">175.011</span>
<span class="t" style="top:89.6px;line-height:12px;height:12px;font-size:10.7px;color:#f0f0f0;white-space:pre;letter-spacing:-0.05px;left:-251.6px;width:300px;text-align:right;">155.011</span>
<span class="t" style="top:106.6px;line-height:12px;height:12px;font-size:10.7px;color:#f0f0f0;white-space:pre;letter-spacing:-0.05px;left:-251.6px;width:300px;text-align:right;">135.011</span>
<span class="t" style="top:123.6px;line-height:12px;height:12px;font-size:10.7px;color:#f0f0f0;white-space:pre;letter-spacing:-0.05px;left:-251.6px;width:300px;text-align:right;">115.011</span>
<span class="t" style="top:140.6px;line-height:12px;height:12px;font-size:10.7px;color:#f0f0f0;white-space:pre;letter-spacing:-0.05px;left:-251.6px;width:300px;text-align:right;">95.011</span>
<span class="t" style="top:157.6px;line-height:12px;height:12px;font-size:10.7px;color:#f0f0f0;white-space:pre;letter-spacing:-0.05px;left:-251.6px;width:300px;text-align:right;">75.011</span>
<span class="t" style="top:174.6px;line-height:12px;height:12px;font-size:10.7px;color:#f0f0f0;white-space:pre;letter-spacing:-0.05px;left:-251.6px;width:300px;text-align:right;">55.011</span>
<span class="t" style="top:191.6px;line-height:12px;height:12px;font-size:10.7px;color:#f0f0f0;white-space:pre;letter-spacing:-0.05px;left:-251.6px;width:300px;text-align:right;">35.011</span>
<span class="t" style="top:208.6px;line-height:12px;height:12px;font-size:10.7px;color:#f0f0f0;white-space:pre;letter-spacing:-0.05px;left:-251.6px;width:300px;text-align:right;">15.011</span>
<span class="t" style="top:225.6px;line-height:12px;height:12px;font-size:10.7px;color:#f0f0f0;white-space:pre;letter-spacing:-0.05px;left:-251.6px;width:300px;text-align:right;">-4.989</span>
<span class="t" style="top:242.6px;line-height:12px;height:12px;font-size:10.7px;color:#f0f0f0;white-space:pre;letter-spacing:-0.05px;left:-251.6px;width:300px;text-align:right;">-24.989</span>
<span class="t" style="top:259.6px;line-height:12px;height:12px;font-size:10.7px;color:#f0f0f0;white-space:pre;letter-spacing:-0.05px;left:-251.6px;width:300px;text-align:right;">-44.989</span>
<span class="t" style="top:276.6px;line-height:12px;height:12px;font-size:10.7px;color:#f0f0f0;white-space:pre;letter-spacing:-0.05px;left:-251.6px;width:300px;text-align:right;">-64.989</span>
<span class="t" style="top:293.6px;line-height:12px;height:12px;font-size:10.7px;color:#f0f0f0;white-space:pre;letter-spacing:-0.05px;left:-251.6px;width:300px;text-align:right;">-84.989</span>
<span class="t" style="top:310.6px;line-height:12px;height:12px;font-size:10.7px;color:#f0f0f0;white-space:pre;letter-spacing:-0.05px;left:-251.6px;width:300px;text-align:right;">-104.989</span>
<span class="t" style="top:327.6px;line-height:12px;height:12px;font-size:10.7px;color:#f0f0f0;white-space:pre;letter-spacing:-0.05px;left:-251.6px;width:300px;text-align:right;">-124.989</span>
<span class="t" style="top:344.6px;line-height:12px;height:12px;font-size:10.7px;color:#f0f0f0;white-space:pre;letter-spacing:-0.05px;left:-251.6px;width:300px;text-align:right;">-144.989</span>
<span class="t" style="top:361.6px;line-height:12px;height:12px;font-size:10.7px;color:#f0f0f0;white-space:pre;letter-spacing:-0.05px;left:-251.6px;width:300px;text-align:right;">-164.989</span>
<span class="t" style="top:378.6px;line-height:12px;height:12px;font-size:10.7px;color:#f0f0f0;white-space:pre;letter-spacing:-0.05px;left:-251.6px;width:300px;text-align:right;">-184.989</span>
<span class="t" style="top:395.6px;line-height:12px;height:12px;font-size:10.7px;color:#f0f0f0;white-space:pre;letter-spacing:-0.05px;left:-251.6px;width:300px;text-align:right;">-204.989</span>
<span class="t" style="top:412.6px;line-height:12px;height:12px;font-size:10.7px;color:#f0f0f0;white-space:pre;letter-spacing:-0.05px;left:-251.6px;width:300px;text-align:right;">-224.989</span>
<span class="t" style="top:429.6px;line-height:12px;height:12px;font-size:10.7px;color:#f0f0f0;white-space:pre;letter-spacing:-0.05px;left:-251.6px;width:300px;text-align:right;">-244.989</span>
<span class="t" style="top:460.0px;line-height:12px;height:12px;font-size:10.6px;color:#fff;white-space:pre;;left:-62.400000000000006px;width:300px;text-align:center;">0</span>
<span class="t" style="top:460.0px;line-height:12px;height:12px;font-size:10.6px;color:#fff;white-space:pre;;left:22.599999999999994px;width:300px;text-align:center;">200</span>
<span class="t" style="top:460.0px;line-height:12px;height:12px;font-size:10.6px;color:#fff;white-space:pre;;left:106.60000000000002px;width:300px;text-align:center;">400</span>
<span class="t" style="top:460.0px;line-height:12px;height:12px;font-size:10.6px;color:#fff;white-space:pre;;left:190.60000000000002px;width:300px;text-align:center;">600</span>
<span class="t" style="top:460.0px;line-height:12px;height:12px;font-size:10.6px;color:#fff;white-space:pre;;left:274.6px;width:300px;text-align:center;">800</span>
<span class="t" style="top:460.0px;line-height:12px;height:12px;font-size:10.6px;color:#fff;white-space:pre;;left:358.6px;width:300px;text-align:center;">1,000</span>
<span class="t" style="top:460.0px;line-height:12px;height:12px;font-size:10.6px;color:#fff;white-space:pre;;left:443.6px;width:300px;text-align:center;">1,200</span>
<span class="t" style="top:460.0px;line-height:12px;height:12px;font-size:10.6px;color:#fff;white-space:pre;;left:527.6px;width:300px;text-align:center;">1,400</span>
<span class="t" style="top:460.0px;line-height:12px;height:12px;font-size:10.6px;color:#fff;white-space:pre;;left:611.6px;width:300px;text-align:center;">1,600</span>
<span class="t" style="top:460.0px;line-height:12px;height:12px;font-size:10.6px;color:#fff;white-space:pre;;left:695.6px;width:300px;text-align:center;">1,800</span>
<span class="t" style="top:460.0px;line-height:12px;height:12px;font-size:10.6px;color:#fff;white-space:pre;;left:779.6px;width:300px;text-align:center;">2,000</span>
<div style="left:871px;top:4px;width:99.6px;height:128.6px;border:1px solid #d4d4d4;box-sizing:border-box"></div>
<span class="t" style="top:60.0px;line-height:18px;height:18px;font-size:14px;color:#000;white-space:pre;;left:872px;">PanelWaveName</span>
<div style="left:876px;top:14px;width:13px;height:13px;background:#00ffff;border:1px solid #000;box-sizing:border-box"></div>
<span class="t" style="top:13.599999999999994px;line-height:14px;height:14px;font-size:11px;color:#fff;white-space:pre;text-shadow:0 0 1px #000,0 0 1px #000;left:894.2px;">1</span>
<div style="left:876px;top:33px;width:13px;height:13px;background:#ffff00;border:1px solid #000;box-sizing:border-box"></div>
<span class="t" style="top:32.60000000000002px;line-height:14px;height:14px;font-size:11px;color:#fff;white-space:pre;text-shadow:0 0 1px #000,0 0 1px #000;left:894.2px;">2</span>
<div style="left:876px;top:52px;width:13px;height:13px;background:#00ff00;border:1px solid #000;box-sizing:border-box"></div>
<span class="t" style="top:51.60000000000002px;line-height:14px;height:14px;font-size:11px;color:#fff;white-space:pre;text-shadow:0 0 1px #000,0 0 1px #000;left:894.2px;">3</span>
<div style="left:876px;top:71px;width:13px;height:13px;background:#ff8000;border:1px solid #000;box-sizing:border-box"></div>
<span class="t" style="top:70.60000000000002px;line-height:14px;height:14px;font-size:11px;color:#fff;white-space:pre;text-shadow:0 0 1px #000,0 0 1px #000;left:894.2px;">4</span>
<div style="left:876px;top:91px;width:13px;height:13px;background:#ff00ff;border:1px solid #000;box-sizing:border-box"></div>
<span class="t" style="top:90.60000000000002px;line-height:14px;height:14px;font-size:11px;color:#fff;white-space:pre;text-shadow:0 0 1px #000,0 0 1px #000;left:894.2px;">5</span>
<div style="left:876px;top:110px;width:13px;height:13px;background:#ebebeb;border:1px solid #000;box-sizing:border-box"></div>
<span class="t" style="top:109.60000000000002px;line-height:14px;height:14px;font-size:11px;color:#fff;white-space:pre;text-shadow:0 0 1px #000,0 0 1px #000;left:894.2px;">6</span>
</div>
</div>
</div>
</body></html>
